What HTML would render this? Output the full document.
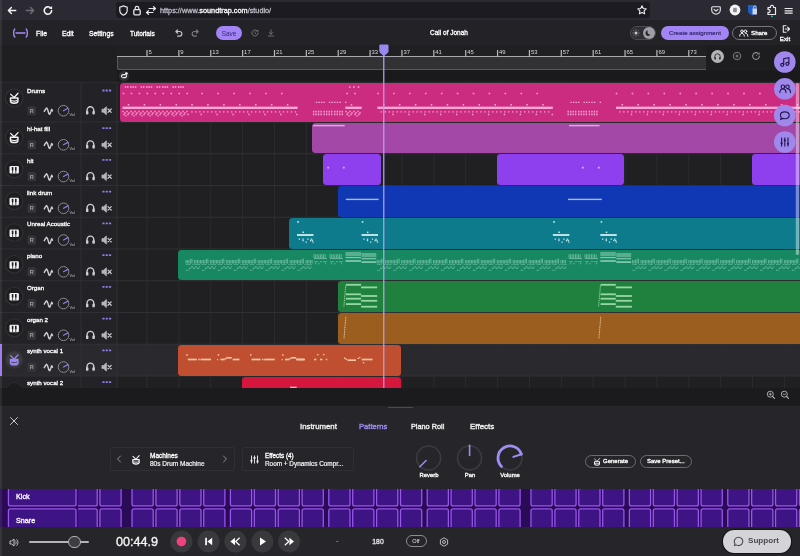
<!DOCTYPE html><html><head><meta charset="utf-8"><title>Call of Jonah - Soundtrap Studio</title><style>
*{box-sizing:border-box;margin:0;padding:0}
html,body{width:800px;height:556px;overflow:hidden;background:#212124;font-family:"Liberation Sans",sans-serif;color:#fff}
.a{position:absolute}
.t{position:absolute;white-space:nowrap;font-weight:700;line-height:1;will-change:transform}
svg{position:absolute;overflow:visible;will-change:transform}
</style></head><body>
<div class="a" style="left:0px;top:0px;width:800px;height:20px;background:#2b2a33;"></div>
<div class="a" style="left:116px;top:2px;width:534px;height:16px;background:#1c1b22;border-radius:3px"></div>
<svg style="left:6.4px;top:5.3px;" width="12" height="11" viewBox="0 0 12 11"><path d="M9.700 5.500H2.600M5.400 2.500L2.400 5.500l3 3" fill="none" stroke="#f0f0f4" stroke-width="1.500" stroke-linecap="round" stroke-linejoin="round"/></svg>
<svg style="left:24.4px;top:5.3px;" width="12" height="11" viewBox="0 0 12 11"><path d="M2.300 5.500H9.400M6.600 2.500l3 3-3 3" fill="none" stroke="#6d6c75" stroke-width="1.500" stroke-linecap="round" stroke-linejoin="round"/></svg>
<svg style="left:42.3px;top:5.3px;" width="12" height="11" viewBox="0 0 12 11"><path d="M9.600 5.500a3.700 3.700 0 1 1-1.200-2.700" fill="none" stroke="#f0f0f4" stroke-width="1.600" stroke-linecap="round"/><path d="M10.100 0.900v3.100H7z" fill="#f0f0f4"/></svg>
<svg style="left:119px;top:5px;" width="9" height="11" viewBox="0 0 9 11"><path d="M4.5 0.8C3.3 1.6 2 1.9 0.8 2v3.2c0 2.3 1.5 4 3.7 5 2.2-1 3.7-2.7 3.7-5V2C7 1.9 5.700 1.600 4.500 0.800z" fill="none" stroke="#e8e8ee" stroke-width="1.2" stroke-linejoin="round"/></svg>
<svg style="left:133px;top:5px;" width="8" height="11" viewBox="0 0 8 11"><rect x="0.8" y="4.6" width="6.4" height="5.2" rx="1" fill="none" stroke="#e8e8ee" stroke-width="1.3"/><path d="M2.2 4.600V3.2a1.8 1.8 0 0 1 3.6 0v1.400" fill="none" stroke="#e8e8ee" stroke-width="1.2"/></svg>
<svg style="left:146px;top:6px;" width="10" height="9" viewBox="0 0 10 9"><path d="M3 2.500h6.500M7.5 0.700l2 1.800-2 1.800M7 6.500H0.500M2.500 4.700l-2 1.800 2 1.800" fill="none" stroke="#e8e8ee" stroke-width="1.2" stroke-linecap="round" stroke-linejoin="round"/></svg>
<div class="t" style="left:160px;top:6.5px;font-size:7.3px;font-weight:400;color:#bcbbc5;will-change:transform;-webkit-text-stroke:0.3px #bcbbc5">https://www.<span style="color:#fbfbfe;-webkit-text-stroke:0.3px #fbfbfe">soundtrap.com</span>/studio/</div>
<svg style="left:637px;top:5px;" width="10" height="10" viewBox="0 0 10 10"><path d="M5 0.800l1.300 2.700 2.900 0.400-2.100 2 0.500 2.900L5 7.400 2.400 8.800l0.500-2.900-2.100-2 2.900-0.400z" fill="none" stroke="#e8e8ee" stroke-width="1.1" stroke-linejoin="round"/></svg>
<svg style="left:711px;top:6px;" width="10" height="9" viewBox="0 0 10 9"><path d="M1.500 0.800h7a0.800 0.800 0 0 1 0.800 0.800v2.300a4.300 4.300 0 0 1-8.600 0V1.600a0.800 0.800 0 0 1 0.800-0.800z" fill="none" stroke="#e8e8ee" stroke-width="1.1"/><path d="M3 3.300l2 1.900 2-1.900" fill="none" stroke="#e8e8ee" stroke-width="1.100" stroke-linecap="round" stroke-linejoin="round"/></svg>
<svg style="left:729px;top:4px;" width="12" height="12" viewBox="0 0 12 12"><circle cx="6" cy="6" r="5.400" fill="#f4f4f6"/><rect x="4.200" y="3.800" width="3.600" height="4.400" rx="0.600" fill="#8a8a90"/></svg>
<svg style="left:747px;top:4px;" width="12" height="12" viewBox="0 0 12 12"><path d="M1 1h8.500v5.500c0 2.500-2 4-4.250 4.800C3 10.500 1 9 1 6.500z" fill="#1f5fc8"/><path d="M5.500 4.500h4.500v6h-4.500z" fill="#c9d7f2"/><path d="M6.500 4.500v-1.200a1.300 1.300 0 0 1 2.600 0v1.200" stroke="#c9d7f2" fill="none" stroke-width="0.900"/></svg>
<svg style="left:765px;top:4px;" width="12" height="13" viewBox="0 0 12 13"><path d="M3 3.500h2.500a1.600 1.600 0 1 1 3 0H10.500v7H3V8.300a1.500 1.500 0 1 0 0-2.700z" fill="none" stroke="#e8e8ee" stroke-width="1.200" stroke-linejoin="round"/><circle cx="7" cy="12.300" r="0.900" fill="#37d0a4"/></svg>
<svg style="left:784px;top:6.5px;" width="9" height="8" viewBox="0 0 9 8"><path d="M1 1.500h7.300M1 3.800h7.300M1 6.100h7.300" stroke="#e8e8ee" stroke-width="1.150" stroke-linecap="round"/></svg>
<div class="a" style="left:0px;top:20px;width:800px;height:25px;background:#232227;"></div>
<svg style="left:11.5px;top:28.3px;" width="17" height="10" viewBox="0 0 17 10"><path d="M2.800 1C1.200 2.600 1.200 7.400 2.800 9M14.200 1c1.600 1.600 1.600 6.400 0 8M4 5h9" fill="none" stroke="#a78bfa" stroke-width="1.350" stroke-linecap="round"/></svg>
<div class="t" style="left:36px;top:30.60px;font-size:6.8px;color:#fff;font-weight:400;-webkit-text-stroke:0.3px #fff;">File</div>
<div class="t" style="left:62px;top:30.60px;font-size:6.8px;color:#fff;font-weight:400;-webkit-text-stroke:0.3px #fff;">Edit</div>
<div class="t" style="left:89px;top:30.60px;font-size:6.8px;color:#fff;font-weight:400;-webkit-text-stroke:0.3px #fff;">Settings</div>
<div class="t" style="left:130px;top:30.75px;font-size:6.5px;color:#fff;font-weight:400;-webkit-text-stroke:0.3px #fff;">Tutorials</div>
<svg style="left:173.7px;top:28.299999999999997px;" width="10" height="10" viewBox="0 0 10 10"><g transform="translate(5 5) scale(0.82) translate(-5 -5.1)"><path d="M1.200 3.300h4.500a2.800 2.800 0 0 1 0 5.600H3.200M3.300 1.200L1.200 3.300l2.100 2.100" fill="none" stroke="#c4c4cc" stroke-width="1.400" stroke-linecap="round" stroke-linejoin="round"/></g></svg>
<svg style="left:190.4px;top:28.299999999999997px;" width="10" height="10" viewBox="0 0 10 10"><g transform="translate(5 5) scale(0.82) translate(-5 -5.1)"><path d="M8.800 3.300H4.300a2.800 2.800 0 0 0 0 5.600h2.500M6.700 1.200l2.100 2.100-2.100 2.100" fill="none" stroke="#7c7c84" stroke-width="1.400" stroke-linecap="round" stroke-linejoin="round"/></g></svg>
<div class="a" style="left:216px;top:26px;width:26px;height:14px;background:#a384f5;border-radius:7px"></div>
<div class="t" style="left:129.2px;width:200px;text-align:center;top:30.60px;font-size:6.4px;color:#33297a;font-weight:400;">Save</div>
<svg style="left:249.6px;top:27.9px;" width="10" height="10" viewBox="0 0 10 10"><g transform="translate(5 5) scale(0.85) translate(-5 -5)"><path d="M8.600 5a3.600 3.600 0 1 1-1.200-2.700" fill="none" stroke="#77777f" stroke-width="1.100" stroke-linecap="round"/><path d="M8.900 1v2.400H6.500z" fill="#77777f"/><path d="M5 3.200V5.200l1.300 0.800" fill="none" stroke="#77777f" stroke-width="0.900"/></g></svg>
<svg style="left:265.9px;top:28px;" width="10" height="10" viewBox="0 0 10 10"><g transform="translate(5 5) scale(0.78) translate(-5 -5)"><path d="M5 1v5.500M2.700 4.300L5 6.600l2.300-2.300M1.500 8.800h7" fill="none" stroke="#77777f" stroke-width="1.100" stroke-linecap="round" stroke-linejoin="round"/></g></svg>
<div class="t" style="left:349px;width:200px;text-align:center;top:29.75px;font-size:6.5px;color:#fff;font-weight:400;-webkit-text-stroke:0.3px #fff;">Call of Jonah</div>
<div class="a" style="left:630px;top:26px;width:26px;height:14px;background:#2f2e34;border-radius:7px;border:1px solid #4c4b52"></div>
<svg style="left:632px;top:29px;" width="8" height="8" viewBox="0 0 8 8"><circle cx="4" cy="4" r="1.500" fill="#c8c8ce"/><path d="M4 0.500v1M4 6.500v1M0.500 4h1M6.500 4h1M1.500 1.500l0.700 0.700M5.800 5.800l0.700 0.700M6.500 1.500l-0.700 0.700M2.200 5.800l-0.700 0.700" stroke="#c8c8ce" stroke-width="0.700"/></svg>
<svg style="left:643px;top:27px;" width="12" height="12" viewBox="0 0 12 12"><circle cx="6" cy="6" r="6" fill="#a09fa8"/><path d="M7.800 7.600A2.800 2.800 0 0 1 5 3.200a2.900 2.900 0 1 0 2.800 4.400z" fill="#2b2a30"/></svg>
<div class="a" style="left:661px;top:26px;width:68px;height:14px;background:#a384f5;border-radius:7px"></div>
<div class="t" style="left:595px;width:200px;text-align:center;top:29.90px;font-size:6.2px;color:#2f2466;font-weight:400;-webkit-text-stroke:0.15px #2f2466;">Create assignment</div>
<div class="a" style="left:732px;top:26px;width:45px;height:14px;background:transparent;border-radius:7px;border:1px solid #77767e"></div>
<svg style="left:739px;top:29px;" width="9" height="8" viewBox="0 0 9 8"><g fill="none" stroke="#fff" stroke-width="0.950" stroke-linecap="round"><circle cx="3" cy="2.300" r="1.300"/><path d="M0.700 7.200c0-2 1-2.900 2.300-2.900s2.300 0.900 2.300 2.900"/><circle cx="6.500" cy="2.300" r="1.300"/><path d="M6.600 4.300c1.300 0 2.200 0.900 2.200 2.900"/></g></svg>
<div class="t" style="left:751.3px;top:29.90px;font-size:6.2px;color:#fff;font-weight:400;-webkit-text-stroke:0.3px #fff;">Share</div>
<svg style="left:781.5px;top:25px;" width="8" height="8" viewBox="0 0 8 8"><path d="M4 0.800H1.300v6.400H4M3.200 4h4.300M5.700 2.200l1.800 1.800-1.800 1.800" fill="none" stroke="#e8e8ee" stroke-width="1.100" stroke-linecap="round" stroke-linejoin="round"/></svg>
<div class="t" style="left:684.9px;width:200px;text-align:center;top:35.50px;font-size:6.2px;color:#fff;font-weight:400;-webkit-text-stroke:0.3px #fff;">Exit</div>
<div class="a" style="left:0px;top:45px;width:800px;height:37px;background:#1f1f22;"></div>
<div class="a" style="left:117px;top:45px;width:683px;height:12px;background:#202023;"></div>
<div class="a" style="left:117px;top:70px;width:683px;height:12px;background:#1a1a1d;"></div>
<div class="a" style="left:117px;top:57.3px;width:590px;height:13.2px;background:#323235;border:1px solid #58585d;border-top:none;border-right:none;border-radius:0 0 0 2.500px"></div>
<div class="a" style="left:117px;top:56.2px;width:590px;height:1.3px;background:#a9a9ad;"></div>
<svg style="left:0px;top:0px;" width="800" height="60" viewBox="0 0 800 60"><rect x="146.4" y="50" width="1.200" height="7" fill="#b9b9bd"/><rect x="178.27" y="50" width="1.200" height="7" fill="#b9b9bd"/><rect x="210.14000000000001" y="50" width="1.200" height="7" fill="#b9b9bd"/><rect x="242.01000000000002" y="50" width="1.200" height="7" fill="#b9b9bd"/><rect x="273.88" y="50" width="1.200" height="7" fill="#b9b9bd"/><rect x="305.75" y="50" width="1.200" height="7" fill="#b9b9bd"/><rect x="337.62" y="50" width="1.200" height="7" fill="#b9b9bd"/><rect x="369.49" y="50" width="1.200" height="7" fill="#b9b9bd"/><rect x="401.36" y="50" width="1.200" height="7" fill="#b9b9bd"/><rect x="433.22999999999996" y="50" width="1.200" height="7" fill="#b9b9bd"/><rect x="465.09999999999997" y="50" width="1.200" height="7" fill="#b9b9bd"/><rect x="496.96999999999997" y="50" width="1.200" height="7" fill="#b9b9bd"/><rect x="528.84" y="50" width="1.200" height="7" fill="#b9b9bd"/><rect x="560.7099999999999" y="50" width="1.200" height="7" fill="#b9b9bd"/><rect x="592.58" y="50" width="1.200" height="7" fill="#b9b9bd"/><rect x="624.4499999999999" y="50" width="1.200" height="7" fill="#b9b9bd"/><rect x="656.32" y="50" width="1.200" height="7" fill="#b9b9bd"/><rect x="688.1899999999999" y="50" width="1.200" height="7" fill="#b9b9bd"/><text x="148.5" y="54.300" font-size="5.900" fill="#d6d6da" font-family="Liberation Sans, sans-serif">5</text><text x="180.37" y="54.300" font-size="5.900" fill="#d6d6da" font-family="Liberation Sans, sans-serif">9</text><text x="212.24" y="54.300" font-size="5.900" fill="#d6d6da" font-family="Liberation Sans, sans-serif">13</text><text x="244.11" y="54.300" font-size="5.900" fill="#d6d6da" font-family="Liberation Sans, sans-serif">17</text><text x="275.98" y="54.300" font-size="5.900" fill="#d6d6da" font-family="Liberation Sans, sans-serif">21</text><text x="307.85" y="54.300" font-size="5.900" fill="#d6d6da" font-family="Liberation Sans, sans-serif">25</text><text x="339.72" y="54.300" font-size="5.900" fill="#d6d6da" font-family="Liberation Sans, sans-serif">29</text><text x="371.59000000000003" y="54.300" font-size="5.900" fill="#d6d6da" font-family="Liberation Sans, sans-serif">33</text><text x="403.46000000000004" y="54.300" font-size="5.900" fill="#d6d6da" font-family="Liberation Sans, sans-serif">37</text><text x="435.33" y="54.300" font-size="5.900" fill="#d6d6da" font-family="Liberation Sans, sans-serif">41</text><text x="467.2" y="54.300" font-size="5.900" fill="#d6d6da" font-family="Liberation Sans, sans-serif">45</text><text x="499.07" y="54.300" font-size="5.900" fill="#d6d6da" font-family="Liberation Sans, sans-serif">49</text><text x="530.94" y="54.300" font-size="5.900" fill="#d6d6da" font-family="Liberation Sans, sans-serif">53</text><text x="562.81" y="54.300" font-size="5.900" fill="#d6d6da" font-family="Liberation Sans, sans-serif">57</text><text x="594.6800000000001" y="54.300" font-size="5.900" fill="#d6d6da" font-family="Liberation Sans, sans-serif">61</text><text x="626.55" y="54.300" font-size="5.900" fill="#d6d6da" font-family="Liberation Sans, sans-serif">65</text><text x="658.4200000000001" y="54.300" font-size="5.900" fill="#d6d6da" font-family="Liberation Sans, sans-serif">69</text><text x="690.29" y="54.300" font-size="5.900" fill="#d6d6da" font-family="Liberation Sans, sans-serif">73</text></svg>
<div class="a" style="left:706px;top:45px;width:94px;height:25.5px;background:#1d1d20;"></div>
<svg style="left:710.5px;top:49.5px;" width="13" height="13" viewBox="0 0 13 13"><circle cx="6.500" cy="6.500" r="6.500" fill="#b4b4b8"/><path d="M3.800 8.300V6.500a2.700 2.700 0 0 1 5.400 0v1.800" fill="none" stroke="#3a3a3e" stroke-width="1"/><rect x="3.300" y="7" width="1.700" height="2.400" rx="0.500" fill="#3a3a3e"/><rect x="8" y="7" width="1.700" height="2.400" rx="0.500" fill="#3a3a3e"/></svg>
<svg style="left:732px;top:51px;" width="10" height="10" viewBox="0 0 10 10"><circle cx="5" cy="5" r="3.600" fill="none" stroke="#6a6a70" stroke-width="1.300"/><circle cx="5" cy="5" r="1.500" fill="#6a6a70"/></svg>
<svg style="left:751px;top:51px;" width="10" height="10" viewBox="0 0 10 10"><path d="M8.400 5a3.400 3.400 0 1 1-1.100-2.500" fill="none" stroke="#8c8c92" stroke-width="1.100" stroke-linecap="round"/><path d="M8.700 1.200v2.300H6.400z" fill="#8c8c92"/><path d="M5 5l1.200-1" stroke="#8c8c92" stroke-width="0.900"/></svg>
<svg style="left:118.6px;top:71px;" width="10" height="10" viewBox="0 0 10 10"><circle cx="5" cy="5" r="5.200" fill="#303034"/><path d="M2.600 5.800V5a1.500 1.500 0 0 1 1.500-1.500h2M7.400 4.600v0.600a1.500 1.500 0 0 1-1.500 1.500H3.800" fill="none" stroke="#ececf0" stroke-width="1.250" stroke-linecap="round"/><circle cx="7.400" cy="2.600" r="1.350" fill="#f4f4f6"/></svg>
<div class="a" style="left:0px;top:82px;width:117px;height:306px;background:#232327;"></div>
<div class="a" style="left:117px;top:82px;width:683px;height:306px;background:#202023;"></div>
<div class="a" style="left:0px;top:344.25px;width:800px;height:31.75px;background:#2a2a2e;"></div>
<div class="a" style="left:0px;top:344.25px;width:2px;height:31.75px;background:#9f7fef;"></div>
<svg style="left:0px;top:0px;" width="800" height="388" viewBox="0 0 800 388"><rect x="146.5" y="82" width="1" height="306" fill="#2c2c30"/><rect x="178.37" y="82" width="1" height="306" fill="#2c2c30"/><rect x="210.24" y="82" width="1" height="306" fill="#2c2c30"/><rect x="242.11" y="82" width="1" height="306" fill="#2c2c30"/><rect x="273.98" y="82" width="1" height="306" fill="#2c2c30"/><rect x="305.85" y="82" width="1" height="306" fill="#2c2c30"/><rect x="337.72" y="82" width="1" height="306" fill="#2c2c30"/><rect x="369.59000000000003" y="82" width="1" height="306" fill="#2c2c30"/><rect x="401.46" y="82" width="1" height="306" fill="#2c2c30"/><rect x="433.33" y="82" width="1" height="306" fill="#2c2c30"/><rect x="465.2" y="82" width="1" height="306" fill="#2c2c30"/><rect x="497.07000000000005" y="82" width="1" height="306" fill="#2c2c30"/><rect x="528.9399999999999" y="82" width="1" height="306" fill="#2c2c30"/><rect x="560.8100000000001" y="82" width="1" height="306" fill="#2c2c30"/><rect x="592.68" y="82" width="1" height="306" fill="#2c2c30"/><rect x="624.5500000000001" y="82" width="1" height="306" fill="#2c2c30"/><rect x="656.42" y="82" width="1" height="306" fill="#2c2c30"/><rect x="688.29" y="82" width="1" height="306" fill="#2c2c30"/><rect x="720.16" y="82" width="1" height="306" fill="#2c2c30"/><rect x="752.03" y="82" width="1" height="306" fill="#2c2c30"/><rect x="783.9" y="82" width="1" height="306" fill="#2c2c30"/><rect x="0" y="81.7" width="800" height="1" fill="#303034"/><rect x="0" y="121.5" width="800" height="1" fill="#303034"/><rect x="0" y="153.25" width="800" height="1" fill="#303034"/><rect x="0" y="185.0" width="800" height="1" fill="#303034"/><rect x="0" y="216.75" width="800" height="1" fill="#303034"/><rect x="0" y="248.5" width="800" height="1" fill="#303034"/><rect x="0" y="280.25" width="800" height="1" fill="#303034"/><rect x="0" y="312.0" width="800" height="1" fill="#303034"/><rect x="0" y="343.75" width="800" height="1" fill="#303034"/><rect x="0" y="375.5" width="800" height="1" fill="#303034"/><rect x="80.500" y="82" width="1" height="306" fill="#303034"/><rect x="116.500" y="82" width="1" height="306" fill="#303034"/></svg>
<svg style="left:0;top:0" width="117" height="388" viewBox="0 0 117 388"><defs><clipPath id="hc"><rect x="0" y="82" width="117" height="306"/></clipPath></defs><g clip-path="url(#hc)"><circle cx="14.200" cy="98.0" r="8.800" fill="#1e1e21" stroke="#303035" stroke-width="1.200"/><g transform="translate(14.200 98.7)"><path d="M-3.700 -0.800v3.200a3.700 2.100 0 0 0 7.400 0v-3.200z" fill="none" stroke="#f2f2f4" stroke-width="1.500" stroke-linejoin="round" stroke-linecap="round"/><path d="M-2.600 1.900c1.600 0.700 3.600 0.700 5.200 0" fill="none" stroke="#f2f2f4" stroke-width="1.100" stroke-linecap="round"/><path d="M-3.600 -4.600l3.400 3.300M3.800 -5.400l-3.800 4.200" fill="none" stroke="#f2f2f4" stroke-width="1.300" stroke-linecap="round"/></g><g fill="#8f7be8"><rect x="102.300" y="89.5" width="2.300" height="1.900" rx="0.500"/><rect x="105.600" y="89.5" width="2.300" height="1.900" rx="0.500"/><rect x="108.900" y="89.5" width="2.300" height="1.900" rx="0.500"/></g><rect x="27.500" y="106.2" width="8.500" height="9" rx="1.500" fill="#35353a"/><text x="31.750" y="112.8" font-size="5.600" font-weight="700" fill="#9c9ca2" text-anchor="middle" font-family="Liberation Sans, sans-serif">R</text><path d="M44.300 111.3l1.300 -2.200 1 -1.200 1 1.600 1.300 4.200 0.900 0.600 0.900 -2.200 1 -2.800 0.800 1.600" fill="none" stroke="#d0d0d5" stroke-width="1.400" stroke-linejoin="round" stroke-linecap="round"/><circle cx="63.500" cy="110.7" r="5.300" fill="none" stroke="#8a8a90" stroke-width="1"/><path d="M63.500 110.7l4.400 -2.400" stroke="#8f7be8" stroke-width="1.300" stroke-linecap="round"/><text x="69.500" y="116.2" font-size="3.800" fill="#b4b4bc" font-family="Liberation Sans, sans-serif">Vol</text><path d="M87 113.0v-2.300a3.400 3.900 0 0 1 6.800 0v2.300" fill="none" stroke="#cfcfd4" stroke-width="1.400"/><rect x="86" y="110.9" width="2.400" height="3.600" rx="0.900" fill="#cfcfd4"/><rect x="92.400" y="110.9" width="2.400" height="3.600" rx="0.900" fill="#cfcfd4"/><path d="M102 109.2h1.700l2.600 -2.500v8l-2.600 -2.500h-1.700z" fill="#b4b4ba" stroke="#b4b4ba" stroke-width="0.900" stroke-linejoin="round"/><path d="M108 109.0l3.200 3.400M111.200 109.0l-3.200 3.400" stroke="#c4c4ca" stroke-width="1.250" stroke-linecap="round"/><circle cx="14.200" cy="137.3" r="8.800" fill="#1e1e21" stroke="#303035" stroke-width="1.200"/><g transform="translate(14.200 138.0)"><path d="M-3.700 -0.800v3.200a3.700 2.100 0 0 0 7.400 0v-3.200z" fill="none" stroke="#f2f2f4" stroke-width="1.500" stroke-linejoin="round" stroke-linecap="round"/><path d="M-2.600 1.900c1.600 0.700 3.600 0.700 5.200 0" fill="none" stroke="#f2f2f4" stroke-width="1.100" stroke-linecap="round"/><path d="M-3.600 -4.600l3.400 3.300M3.800 -5.400l-3.800 4.200" fill="none" stroke="#f2f2f4" stroke-width="1.300" stroke-linecap="round"/></g><g fill="#8f7be8"><rect x="102.300" y="127.19999999999999" width="2.300" height="1.900" rx="0.500"/><rect x="105.600" y="127.19999999999999" width="2.300" height="1.900" rx="0.500"/><rect x="108.900" y="127.19999999999999" width="2.300" height="1.900" rx="0.500"/></g><rect x="27.500" y="140.3" width="8.500" height="9" rx="1.500" fill="#35353a"/><text x="31.750" y="146.9" font-size="5.600" font-weight="700" fill="#9c9ca2" text-anchor="middle" font-family="Liberation Sans, sans-serif">R</text><path d="M44.300 145.4l1.300 -2.200 1 -1.200 1 1.600 1.300 4.200 0.900 0.600 0.900 -2.200 1 -2.800 0.800 1.600" fill="none" stroke="#d0d0d5" stroke-width="1.400" stroke-linejoin="round" stroke-linecap="round"/><circle cx="63.500" cy="144.8" r="5.300" fill="none" stroke="#8a8a90" stroke-width="1"/><path d="M63.500 144.8l4.400 -2.400" stroke="#8f7be8" stroke-width="1.300" stroke-linecap="round"/><text x="69.500" y="150.3" font-size="3.800" fill="#b4b4bc" font-family="Liberation Sans, sans-serif">Vol</text><path d="M87 147.10000000000002v-2.300a3.400 3.900 0 0 1 6.800 0v2.300" fill="none" stroke="#cfcfd4" stroke-width="1.400"/><rect x="86" y="145.0" width="2.400" height="3.600" rx="0.900" fill="#cfcfd4"/><rect x="92.400" y="145.0" width="2.400" height="3.600" rx="0.900" fill="#cfcfd4"/><path d="M102 143.3h1.700l2.600 -2.500v8l-2.600 -2.500h-1.700z" fill="#b4b4ba" stroke="#b4b4ba" stroke-width="0.900" stroke-linejoin="round"/><path d="M108 143.10000000000002l3.200 3.400M111.200 143.10000000000002l-3.200 3.400" stroke="#c4c4ca" stroke-width="1.250" stroke-linecap="round"/><circle cx="14.200" cy="169.05" r="8.800" fill="#1e1e21" stroke="#303035" stroke-width="1.200"/><g transform="translate(14.200 169.75)"><rect x="-4.700" y="-3.700" width="9.400" height="7.400" rx="1.300" fill="#f2f2f4"/><path d="M-1.600 -0.200v3.900M1.600 -0.200v3.900" stroke="#1b1b1e" stroke-width="0.800"/><rect x="-2.400" y="-2.700" width="1.600" height="3.400" fill="#1b1b1e"/><rect x="0.800" y="-2.700" width="1.600" height="3.400" fill="#1b1b1e"/></g><g fill="#8f7be8"><rect x="102.300" y="158.95" width="2.300" height="1.900" rx="0.500"/><rect x="105.600" y="158.95" width="2.300" height="1.900" rx="0.500"/><rect x="108.900" y="158.95" width="2.300" height="1.900" rx="0.500"/></g><rect x="27.500" y="172.05" width="8.500" height="9" rx="1.500" fill="#35353a"/><text x="31.750" y="178.65" font-size="5.600" font-weight="700" fill="#9c9ca2" text-anchor="middle" font-family="Liberation Sans, sans-serif">R</text><path d="M44.300 177.15l1.300 -2.200 1 -1.200 1 1.600 1.300 4.200 0.900 0.600 0.900 -2.200 1 -2.800 0.800 1.600" fill="none" stroke="#d0d0d5" stroke-width="1.400" stroke-linejoin="round" stroke-linecap="round"/><circle cx="63.500" cy="176.55" r="5.300" fill="none" stroke="#8a8a90" stroke-width="1"/><path d="M63.500 176.55l4.400 -2.400" stroke="#8f7be8" stroke-width="1.300" stroke-linecap="round"/><text x="69.500" y="182.05" font-size="3.800" fill="#b4b4bc" font-family="Liberation Sans, sans-serif">Vol</text><path d="M87 178.85000000000002v-2.300a3.400 3.900 0 0 1 6.800 0v2.300" fill="none" stroke="#cfcfd4" stroke-width="1.400"/><rect x="86" y="176.75" width="2.400" height="3.600" rx="0.900" fill="#cfcfd4"/><rect x="92.400" y="176.75" width="2.400" height="3.600" rx="0.900" fill="#cfcfd4"/><path d="M102 175.05h1.700l2.600 -2.500v8l-2.600 -2.500h-1.700z" fill="#b4b4ba" stroke="#b4b4ba" stroke-width="0.900" stroke-linejoin="round"/><path d="M108 174.85000000000002l3.200 3.400M111.200 174.85000000000002l-3.200 3.400" stroke="#c4c4ca" stroke-width="1.250" stroke-linecap="round"/><circle cx="14.200" cy="200.8" r="8.800" fill="#1e1e21" stroke="#303035" stroke-width="1.200"/><g transform="translate(14.200 201.5)"><rect x="-4.700" y="-3.700" width="9.400" height="7.400" rx="1.300" fill="#f2f2f4"/><path d="M-1.600 -0.200v3.900M1.600 -0.200v3.900" stroke="#1b1b1e" stroke-width="0.800"/><rect x="-2.400" y="-2.700" width="1.600" height="3.400" fill="#1b1b1e"/><rect x="0.800" y="-2.700" width="1.600" height="3.400" fill="#1b1b1e"/></g><g fill="#8f7be8"><rect x="102.300" y="190.7" width="2.300" height="1.900" rx="0.500"/><rect x="105.600" y="190.7" width="2.300" height="1.900" rx="0.500"/><rect x="108.900" y="190.7" width="2.300" height="1.900" rx="0.500"/></g><rect x="27.500" y="203.8" width="8.500" height="9" rx="1.500" fill="#35353a"/><text x="31.750" y="210.4" font-size="5.600" font-weight="700" fill="#9c9ca2" text-anchor="middle" font-family="Liberation Sans, sans-serif">R</text><path d="M44.300 208.9l1.300 -2.200 1 -1.200 1 1.600 1.300 4.200 0.900 0.600 0.900 -2.200 1 -2.800 0.800 1.600" fill="none" stroke="#d0d0d5" stroke-width="1.400" stroke-linejoin="round" stroke-linecap="round"/><circle cx="63.500" cy="208.3" r="5.300" fill="none" stroke="#8a8a90" stroke-width="1"/><path d="M63.500 208.3l4.400 -2.400" stroke="#8f7be8" stroke-width="1.300" stroke-linecap="round"/><text x="69.500" y="213.8" font-size="3.800" fill="#b4b4bc" font-family="Liberation Sans, sans-serif">Vol</text><path d="M87 210.60000000000002v-2.300a3.400 3.900 0 0 1 6.800 0v2.300" fill="none" stroke="#cfcfd4" stroke-width="1.400"/><rect x="86" y="208.5" width="2.400" height="3.600" rx="0.900" fill="#cfcfd4"/><rect x="92.400" y="208.5" width="2.400" height="3.600" rx="0.900" fill="#cfcfd4"/><path d="M102 206.8h1.700l2.600 -2.500v8l-2.600 -2.500h-1.700z" fill="#b4b4ba" stroke="#b4b4ba" stroke-width="0.900" stroke-linejoin="round"/><path d="M108 206.60000000000002l3.200 3.400M111.200 206.60000000000002l-3.200 3.400" stroke="#c4c4ca" stroke-width="1.250" stroke-linecap="round"/><circle cx="14.200" cy="232.55" r="8.800" fill="#1e1e21" stroke="#303035" stroke-width="1.200"/><g transform="translate(14.200 233.25)"><rect x="-4.700" y="-3.700" width="9.400" height="7.400" rx="1.300" fill="#f2f2f4"/><path d="M-1.600 -0.200v3.900M1.600 -0.200v3.900" stroke="#1b1b1e" stroke-width="0.800"/><rect x="-2.400" y="-2.700" width="1.600" height="3.400" fill="#1b1b1e"/><rect x="0.800" y="-2.700" width="1.600" height="3.400" fill="#1b1b1e"/></g><g fill="#8f7be8"><rect x="102.300" y="222.45" width="2.300" height="1.900" rx="0.500"/><rect x="105.600" y="222.45" width="2.300" height="1.900" rx="0.500"/><rect x="108.900" y="222.45" width="2.300" height="1.900" rx="0.500"/></g><rect x="27.500" y="235.55" width="8.500" height="9" rx="1.500" fill="#35353a"/><text x="31.750" y="242.15" font-size="5.600" font-weight="700" fill="#9c9ca2" text-anchor="middle" font-family="Liberation Sans, sans-serif">R</text><path d="M44.300 240.65l1.300 -2.200 1 -1.200 1 1.600 1.300 4.200 0.900 0.600 0.900 -2.200 1 -2.800 0.800 1.600" fill="none" stroke="#d0d0d5" stroke-width="1.400" stroke-linejoin="round" stroke-linecap="round"/><circle cx="63.500" cy="240.05" r="5.300" fill="none" stroke="#8a8a90" stroke-width="1"/><path d="M63.500 240.05l4.400 -2.400" stroke="#8f7be8" stroke-width="1.300" stroke-linecap="round"/><text x="69.500" y="245.55" font-size="3.800" fill="#b4b4bc" font-family="Liberation Sans, sans-serif">Vol</text><path d="M87 242.35000000000002v-2.300a3.400 3.900 0 0 1 6.800 0v2.300" fill="none" stroke="#cfcfd4" stroke-width="1.400"/><rect x="86" y="240.25" width="2.400" height="3.600" rx="0.900" fill="#cfcfd4"/><rect x="92.400" y="240.25" width="2.400" height="3.600" rx="0.900" fill="#cfcfd4"/><path d="M102 238.55h1.700l2.600 -2.500v8l-2.600 -2.500h-1.700z" fill="#b4b4ba" stroke="#b4b4ba" stroke-width="0.900" stroke-linejoin="round"/><path d="M108 238.35000000000002l3.200 3.400M111.200 238.35000000000002l-3.200 3.400" stroke="#c4c4ca" stroke-width="1.250" stroke-linecap="round"/><circle cx="14.200" cy="264.3" r="8.800" fill="#1e1e21" stroke="#303035" stroke-width="1.200"/><g transform="translate(14.200 265.0)"><rect x="-4.700" y="-3.700" width="9.400" height="7.400" rx="1.300" fill="#f2f2f4"/><path d="M-1.600 -0.200v3.900M1.600 -0.200v3.900" stroke="#1b1b1e" stroke-width="0.800"/><rect x="-2.400" y="-2.700" width="1.600" height="3.400" fill="#1b1b1e"/><rect x="0.800" y="-2.700" width="1.600" height="3.400" fill="#1b1b1e"/></g><g fill="#8f7be8"><rect x="102.300" y="254.20000000000002" width="2.300" height="1.900" rx="0.500"/><rect x="105.600" y="254.20000000000002" width="2.300" height="1.900" rx="0.500"/><rect x="108.900" y="254.20000000000002" width="2.300" height="1.900" rx="0.500"/></g><rect x="27.500" y="267.3" width="8.500" height="9" rx="1.500" fill="#35353a"/><text x="31.750" y="273.90000000000003" font-size="5.600" font-weight="700" fill="#9c9ca2" text-anchor="middle" font-family="Liberation Sans, sans-serif">R</text><path d="M44.300 272.40000000000003l1.300 -2.200 1 -1.200 1 1.600 1.300 4.200 0.900 0.600 0.900 -2.200 1 -2.800 0.800 1.600" fill="none" stroke="#d0d0d5" stroke-width="1.400" stroke-linejoin="round" stroke-linecap="round"/><circle cx="63.500" cy="271.8" r="5.300" fill="none" stroke="#8a8a90" stroke-width="1"/><path d="M63.500 271.8l4.400 -2.400" stroke="#8f7be8" stroke-width="1.300" stroke-linecap="round"/><text x="69.500" y="277.3" font-size="3.800" fill="#b4b4bc" font-family="Liberation Sans, sans-serif">Vol</text><path d="M87 274.1v-2.300a3.400 3.900 0 0 1 6.800 0v2.300" fill="none" stroke="#cfcfd4" stroke-width="1.400"/><rect x="86" y="272.0" width="2.400" height="3.600" rx="0.900" fill="#cfcfd4"/><rect x="92.400" y="272.0" width="2.400" height="3.600" rx="0.900" fill="#cfcfd4"/><path d="M102 270.3h1.700l2.600 -2.500v8l-2.600 -2.500h-1.700z" fill="#b4b4ba" stroke="#b4b4ba" stroke-width="0.900" stroke-linejoin="round"/><path d="M108 270.1l3.200 3.400M111.200 270.1l-3.200 3.400" stroke="#c4c4ca" stroke-width="1.250" stroke-linecap="round"/><circle cx="14.200" cy="296.05" r="8.800" fill="#1e1e21" stroke="#303035" stroke-width="1.200"/><g transform="translate(14.200 296.75)"><rect x="-4.700" y="-3.700" width="9.400" height="7.400" rx="1.300" fill="#f2f2f4"/><path d="M-1.600 -0.200v3.900M1.600 -0.200v3.900" stroke="#1b1b1e" stroke-width="0.800"/><rect x="-2.400" y="-2.700" width="1.600" height="3.400" fill="#1b1b1e"/><rect x="0.800" y="-2.700" width="1.600" height="3.400" fill="#1b1b1e"/></g><g fill="#8f7be8"><rect x="102.300" y="285.95000000000005" width="2.300" height="1.900" rx="0.500"/><rect x="105.600" y="285.95000000000005" width="2.300" height="1.900" rx="0.500"/><rect x="108.900" y="285.95000000000005" width="2.300" height="1.900" rx="0.500"/></g><rect x="27.500" y="299.05" width="8.500" height="9" rx="1.500" fill="#35353a"/><text x="31.750" y="305.65000000000003" font-size="5.600" font-weight="700" fill="#9c9ca2" text-anchor="middle" font-family="Liberation Sans, sans-serif">R</text><path d="M44.300 304.15000000000003l1.300 -2.200 1 -1.200 1 1.600 1.300 4.200 0.900 0.600 0.900 -2.200 1 -2.800 0.800 1.600" fill="none" stroke="#d0d0d5" stroke-width="1.400" stroke-linejoin="round" stroke-linecap="round"/><circle cx="63.500" cy="303.55" r="5.300" fill="none" stroke="#8a8a90" stroke-width="1"/><path d="M63.500 303.55l4.400 -2.400" stroke="#8f7be8" stroke-width="1.300" stroke-linecap="round"/><text x="69.500" y="309.05" font-size="3.800" fill="#b4b4bc" font-family="Liberation Sans, sans-serif">Vol</text><path d="M87 305.85v-2.300a3.400 3.900 0 0 1 6.800 0v2.300" fill="none" stroke="#cfcfd4" stroke-width="1.400"/><rect x="86" y="303.75" width="2.400" height="3.600" rx="0.900" fill="#cfcfd4"/><rect x="92.400" y="303.75" width="2.400" height="3.600" rx="0.900" fill="#cfcfd4"/><path d="M102 302.05h1.700l2.600 -2.500v8l-2.600 -2.500h-1.700z" fill="#b4b4ba" stroke="#b4b4ba" stroke-width="0.900" stroke-linejoin="round"/><path d="M108 301.85l3.200 3.400M111.200 301.85l-3.200 3.400" stroke="#c4c4ca" stroke-width="1.250" stroke-linecap="round"/><circle cx="14.200" cy="327.8" r="8.800" fill="#1e1e21" stroke="#303035" stroke-width="1.200"/><g transform="translate(14.200 328.5)"><rect x="-4.700" y="-3.700" width="9.400" height="7.400" rx="1.300" fill="#f2f2f4"/><path d="M-1.600 -0.200v3.900M1.600 -0.200v3.900" stroke="#1b1b1e" stroke-width="0.800"/><rect x="-2.400" y="-2.700" width="1.600" height="3.400" fill="#1b1b1e"/><rect x="0.800" y="-2.700" width="1.600" height="3.400" fill="#1b1b1e"/></g><g fill="#8f7be8"><rect x="102.300" y="317.70000000000005" width="2.300" height="1.900" rx="0.500"/><rect x="105.600" y="317.70000000000005" width="2.300" height="1.900" rx="0.500"/><rect x="108.900" y="317.70000000000005" width="2.300" height="1.900" rx="0.500"/></g><rect x="27.500" y="330.8" width="8.500" height="9" rx="1.500" fill="#35353a"/><text x="31.750" y="337.40000000000003" font-size="5.600" font-weight="700" fill="#9c9ca2" text-anchor="middle" font-family="Liberation Sans, sans-serif">R</text><path d="M44.300 335.90000000000003l1.300 -2.200 1 -1.200 1 1.600 1.300 4.200 0.900 0.600 0.900 -2.200 1 -2.800 0.800 1.600" fill="none" stroke="#d0d0d5" stroke-width="1.400" stroke-linejoin="round" stroke-linecap="round"/><circle cx="63.500" cy="335.3" r="5.300" fill="none" stroke="#8a8a90" stroke-width="1"/><path d="M63.500 335.3l4.400 -2.400" stroke="#8f7be8" stroke-width="1.300" stroke-linecap="round"/><text x="69.500" y="340.8" font-size="3.800" fill="#b4b4bc" font-family="Liberation Sans, sans-serif">Vol</text><path d="M87 337.6v-2.300a3.400 3.900 0 0 1 6.800 0v2.300" fill="none" stroke="#cfcfd4" stroke-width="1.400"/><rect x="86" y="335.5" width="2.400" height="3.600" rx="0.900" fill="#cfcfd4"/><rect x="92.400" y="335.5" width="2.400" height="3.600" rx="0.900" fill="#cfcfd4"/><path d="M102 333.8h1.700l2.600 -2.500v8l-2.600 -2.500h-1.700z" fill="#b4b4ba" stroke="#b4b4ba" stroke-width="0.900" stroke-linejoin="round"/><path d="M108 333.6l3.200 3.400M111.200 333.6l-3.200 3.400" stroke="#c4c4ca" stroke-width="1.250" stroke-linecap="round"/><circle cx="14.200" cy="359.55" r="8.800" fill="#3a3a3f" stroke="#303035" stroke-width="1.200"/><g transform="translate(14.200 360.25)"><path d="M-3.700 -0.800v3.200a3.700 2.100 0 0 0 7.400 0v-3.200z" fill="#9c86f2" stroke="#9c86f2" stroke-width="1.500" stroke-linejoin="round" stroke-linecap="round"/><path d="M-2.600 1.900c1.600 0.700 3.600 0.700 5.200 0" fill="none" stroke="#38383d" stroke-width="0.900" stroke-linecap="round"/><path d="M-3.600 -4.600l3.400 3.300M3.800 -5.400l-3.800 4.200" fill="none" stroke="#9c86f2" stroke-width="1.300" stroke-linecap="round"/></g><g fill="#8f7be8"><rect x="102.300" y="349.45000000000005" width="2.300" height="1.900" rx="0.500"/><rect x="105.600" y="349.45000000000005" width="2.300" height="1.900" rx="0.500"/><rect x="108.900" y="349.45000000000005" width="2.300" height="1.900" rx="0.500"/></g><rect x="27.500" y="362.55" width="8.500" height="9" rx="1.500" fill="#35353a"/><text x="31.750" y="369.15000000000003" font-size="5.600" font-weight="700" fill="#9c9ca2" text-anchor="middle" font-family="Liberation Sans, sans-serif">R</text><path d="M44.300 367.65000000000003l1.300 -2.200 1 -1.200 1 1.600 1.300 4.200 0.900 0.600 0.900 -2.200 1 -2.800 0.800 1.600" fill="none" stroke="#d0d0d5" stroke-width="1.400" stroke-linejoin="round" stroke-linecap="round"/><circle cx="63.500" cy="367.05" r="5.300" fill="none" stroke="#8a8a90" stroke-width="1"/><path d="M63.500 367.05l4.400 -2.400" stroke="#8f7be8" stroke-width="1.300" stroke-linecap="round"/><text x="69.500" y="372.55" font-size="3.800" fill="#b4b4bc" font-family="Liberation Sans, sans-serif">Vol</text><path d="M87 369.35v-2.300a3.400 3.900 0 0 1 6.800 0v2.300" fill="none" stroke="#cfcfd4" stroke-width="1.400"/><rect x="86" y="367.25" width="2.400" height="3.600" rx="0.900" fill="#cfcfd4"/><rect x="92.400" y="367.25" width="2.400" height="3.600" rx="0.900" fill="#cfcfd4"/><path d="M102 365.55h1.700l2.600 -2.500v8l-2.600 -2.500h-1.700z" fill="#b4b4ba" stroke="#b4b4ba" stroke-width="0.900" stroke-linejoin="round"/><path d="M108 365.35l3.200 3.400M111.200 365.35l-3.200 3.400" stroke="#c4c4ca" stroke-width="1.250" stroke-linecap="round"/><circle cx="14.200" cy="391.3" r="8.800" fill="#1c1c1f" stroke="#2e2e32" stroke-width="1"/><g fill="#8f7be8"><rect x="102.300" y="381.20000000000005" width="2.300" height="1.900" rx="0.500"/><rect x="105.600" y="381.20000000000005" width="2.300" height="1.900" rx="0.500"/><rect x="108.900" y="381.20000000000005" width="2.300" height="1.900" rx="0.500"/></g></g></svg>
<div class="t" style="left:27.2px;top:88.30px;font-size:6.2px;color:#fff;font-weight:400;-webkit-text-stroke:0.3px #fff;">Drums</div>
<div class="t" style="left:27.2px;top:126.00px;font-size:6.2px;color:#fff;font-weight:400;-webkit-text-stroke:0.3px #fff;">hi-hat fill</div>
<div class="t" style="left:27.2px;top:157.75px;font-size:6.2px;color:#fff;font-weight:400;-webkit-text-stroke:0.3px #fff;">hit</div>
<div class="t" style="left:27.2px;top:189.50px;font-size:6.2px;color:#fff;font-weight:400;-webkit-text-stroke:0.3px #fff;">link drum</div>
<div class="t" style="left:27.2px;top:221.25px;font-size:6.2px;color:#fff;font-weight:400;-webkit-text-stroke:0.3px #fff;">Unreal Acoustic</div>
<div class="t" style="left:27.2px;top:253.00px;font-size:6.2px;color:#fff;font-weight:400;-webkit-text-stroke:0.3px #fff;">piano</div>
<div class="t" style="left:27.2px;top:284.75px;font-size:6.2px;color:#fff;font-weight:400;-webkit-text-stroke:0.3px #fff;">Organ</div>
<div class="t" style="left:27.2px;top:316.50px;font-size:6.2px;color:#fff;font-weight:400;-webkit-text-stroke:0.3px #fff;">organ 2</div>
<div class="t" style="left:27.2px;top:348.25px;font-size:6.2px;color:#fff;font-weight:400;-webkit-text-stroke:0.3px #fff;">synth vocal 1</div>
<div class="t" style="left:27.2px;top:380.00px;font-size:6.2px;color:#fff;font-weight:400;-webkit-text-stroke:0.3px #fff;">synth vocal 2</div>
<div class="a" style="left:119.8px;top:82.8px;width:680.2px;height:38.8px;background:#cc2c80;border-radius:3.5px 0 0 3.5px"></div>
<div class="a" style="left:311.5px;top:122.6px;width:488.5px;height:30.75px;background:#a348a6;border-radius:3.5px 0 0 3.5px"></div>
<div class="a" style="left:323px;top:154.35px;width:58px;height:30.75px;background:#8f40ee;border-radius:3.5px"></div>
<div class="a" style="left:496.8px;top:154.35px;width:127.19999999999999px;height:30.75px;background:#8f40ee;border-radius:3.5px"></div>
<div class="a" style="left:751.8px;top:154.35px;width:48.200000000000045px;height:30.75px;background:#8f40ee;border-radius:3.5px 0 0 3.5px"></div>
<div class="a" style="left:337.5px;top:186.1px;width:462.5px;height:30.75px;background:#1038b4;border-radius:3.5px 0 0 3.5px"></div>
<div class="a" style="left:289.2px;top:217.85px;width:510.8px;height:30.75px;background:#0d7b8c;border-radius:3.5px 0 0 3.5px"></div>
<div class="a" style="left:178.2px;top:249.6px;width:621.8px;height:30.75000000000003px;background:#188863;border-radius:3.5px 0 0 3.5px"></div>
<div class="a" style="left:337.5px;top:281.35px;width:462.5px;height:30.75px;background:#20813f;border-radius:3.5px 0 0 3.5px"></div>
<div class="a" style="left:337.5px;top:313.1px;width:462.5px;height:30.75px;background:#9b5e1e;border-radius:3.5px 0 0 3.5px"></div>
<div class="a" style="left:178.2px;top:344.85px;width:223.10000000000002px;height:30.75px;background:#bf4f30;border-radius:3.5px"></div>
<div class="a" style="left:241.6px;top:376.6px;width:159.70000000000002px;height:30.75px;background:#d6173d;border-radius:3.5px"></div>
<svg style="left:0;top:0" width="800" height="388" viewBox="0 0 800 388"><defs><clipPath id="tc"><rect x="0" y="40" width="800" height="348"/></clipPath></defs><g clip-path="url(#tc)"><path d="M122.75 92.65h1.5v1.5h-1.5zM130.72 92.65h1.5v1.5h-1.5zM138.68 92.65h1.5v1.5h-1.5zM146.65 92.65h1.5v1.5h-1.5zM154.62 92.65h1.5v1.5h-1.5zM162.59 92.65h1.5v1.5h-1.5zM170.55 92.65h1.5v1.5h-1.5zM178.52 92.65h1.5v1.5h-1.5zM186.49 92.65h1.5v1.5h-1.5z" fill="#fbaad8"/><path d="M127.75 104.05h1.5v1.5h-1.5zM143.68 104.05h1.5v1.5h-1.5zM159.62 104.05h1.5v1.5h-1.5zM175.55 104.05h1.5v1.5h-1.5z" fill="#fbaad8"/><rect x="122.50" y="106.65" width="65.50" height="2.3" fill="#fbaad8"/><path d="M122.35 110.85h1.3v1.3h-1.3zM126.35 110.85h1.3v1.3h-1.3zM130.35 110.85h1.3v1.3h-1.3zM134.35 110.85h1.3v1.3h-1.3zM138.35 110.85h1.3v1.3h-1.3zM142.35 110.85h1.3v1.3h-1.3zM146.35 110.85h1.3v1.3h-1.3zM150.35 110.85h1.3v1.3h-1.3zM154.35 110.85h1.3v1.3h-1.3zM158.35 110.85h1.3v1.3h-1.3zM162.35 110.85h1.3v1.3h-1.3zM166.35 110.85h1.3v1.3h-1.3zM170.35 110.85h1.3v1.3h-1.3zM174.35 110.85h1.3v1.3h-1.3zM178.35 110.85h1.3v1.3h-1.3zM182.35 110.85h1.3v1.3h-1.3zM186.35 110.85h1.3v1.3h-1.3z" fill="#fbaad8"/><path d="M124.35 112.35h1.3v1.3h-1.3zM128.35 112.35h1.3v1.3h-1.3zM132.35 112.35h1.3v1.3h-1.3zM136.35 112.35h1.3v1.3h-1.3zM140.35 112.35h1.3v1.3h-1.3zM144.35 112.35h1.3v1.3h-1.3zM148.35 112.35h1.3v1.3h-1.3zM152.35 112.35h1.3v1.3h-1.3zM156.35 112.35h1.3v1.3h-1.3zM160.35 112.35h1.3v1.3h-1.3zM164.35 112.35h1.3v1.3h-1.3zM168.35 112.35h1.3v1.3h-1.3zM172.35 112.35h1.3v1.3h-1.3zM176.35 112.35h1.3v1.3h-1.3zM180.35 112.35h1.3v1.3h-1.3zM184.35 112.35h1.3v1.3h-1.3z" fill="#fbaad8"/><path d="M123.35 113.85h1.3v1.3h-1.3zM127.35 113.85h1.3v1.3h-1.3zM131.35 113.85h1.3v1.3h-1.3zM135.35 113.85h1.3v1.3h-1.3zM139.35 113.85h1.3v1.3h-1.3zM143.35 113.85h1.3v1.3h-1.3zM147.35 113.85h1.3v1.3h-1.3zM151.35 113.85h1.3v1.3h-1.3zM155.35 113.85h1.3v1.3h-1.3zM159.35 113.85h1.3v1.3h-1.3zM163.35 113.85h1.3v1.3h-1.3zM167.35 113.85h1.3v1.3h-1.3zM171.35 113.85h1.3v1.3h-1.3zM175.35 113.85h1.3v1.3h-1.3zM179.35 113.85h1.3v1.3h-1.3zM183.35 113.85h1.3v1.3h-1.3zM187.35 113.85h1.3v1.3h-1.3z" fill="#fbaad8"/><path d="M125.35 115.25h1.3v1.3h-1.3zM133.35 115.25h1.3v1.3h-1.3zM141.35 115.25h1.3v1.3h-1.3zM149.35 115.25h1.3v1.3h-1.3zM157.35 115.25h1.3v1.3h-1.3zM165.35 115.25h1.3v1.3h-1.3zM173.35 115.25h1.3v1.3h-1.3zM181.35 115.25h1.3v1.3h-1.3z" fill="#fbaad8"/><path d="M124.75 86.30h1.5v1.4h-1.5zM127.05 86.30h1.5v1.4h-1.5zM130.25 86.30h1.5v1.4h-1.5zM132.55 86.30h1.5v1.4h-1.5zM134.85 86.30h1.5v1.4h-1.5z" fill="#fbaad8"/><path d="M140.65 86.30h1.5v1.4h-1.5zM142.95 86.30h1.5v1.4h-1.5zM146.15 86.30h1.5v1.4h-1.5zM148.45 86.30h1.5v1.4h-1.5zM150.75 86.30h1.5v1.4h-1.5z" fill="#fbaad8"/><path d="M156.55 86.30h1.5v1.4h-1.5zM158.85 86.30h1.5v1.4h-1.5zM162.05 86.30h1.5v1.4h-1.5zM164.35 86.30h1.5v1.4h-1.5zM166.65 86.30h1.5v1.4h-1.5z" fill="#fbaad8"/><path d="M172.45 86.30h1.5v1.4h-1.5zM174.75 86.30h1.5v1.4h-1.5zM177.95 86.30h1.5v1.4h-1.5zM180.25 86.30h1.5v1.4h-1.5zM182.55 86.30h1.5v1.4h-1.5z" fill="#fbaad8"/><path d="M201.38 92.65h1.5v1.5h-1.5zM217.32 92.65h1.5v1.5h-1.5zM233.25 92.65h1.5v1.5h-1.5zM249.19 92.65h1.5v1.5h-1.5zM265.12 92.65h1.5v1.5h-1.5zM281.05 92.65h1.5v1.5h-1.5z" fill="#fbaad8"/><path d="M191.25 104.05h1.5v1.5h-1.5zM207.18 104.05h1.5v1.5h-1.5zM223.12 104.05h1.5v1.5h-1.5zM239.05 104.05h1.5v1.5h-1.5zM254.99 104.05h1.5v1.5h-1.5zM270.92 104.05h1.5v1.5h-1.5zM286.85 104.05h1.5v1.5h-1.5z" fill="#fbaad8"/><rect x="188.00" y="106.65" width="109.60" height="2.3" fill="#fbaad8"/><path d="M191.25 111.25h1.3v1.3h-1.3zM195.23 111.25h1.3v1.3h-1.3zM199.22 111.25h1.3v1.3h-1.3zM203.20 111.25h1.3v1.3h-1.3zM207.18 111.25h1.3v1.3h-1.3zM211.17 111.25h1.3v1.3h-1.3zM215.15 111.25h1.3v1.3h-1.3zM219.13 111.25h1.3v1.3h-1.3zM223.12 111.25h1.3v1.3h-1.3zM227.10 111.25h1.3v1.3h-1.3zM231.08 111.25h1.3v1.3h-1.3zM235.07 111.25h1.3v1.3h-1.3zM239.05 111.25h1.3v1.3h-1.3zM243.04 111.25h1.3v1.3h-1.3zM247.02 111.25h1.3v1.3h-1.3zM251.00 111.25h1.3v1.3h-1.3zM254.99 111.25h1.3v1.3h-1.3zM258.97 111.25h1.3v1.3h-1.3zM262.95 111.25h1.3v1.3h-1.3zM266.94 111.25h1.3v1.3h-1.3zM270.92 111.25h1.3v1.3h-1.3zM274.90 111.25h1.3v1.3h-1.3zM278.89 111.25h1.3v1.3h-1.3zM282.87 111.25h1.3v1.3h-1.3zM286.85 111.25h1.3v1.3h-1.3zM290.84 111.25h1.3v1.3h-1.3zM294.82 111.25h1.3v1.3h-1.3z" fill="#fbaad8"/><path d="M200.55 113.85h1.3v1.3h-1.3zM216.48 113.85h1.3v1.3h-1.3zM232.42 113.85h1.3v1.3h-1.3zM248.35 113.85h1.3v1.3h-1.3zM264.29 113.85h1.3v1.3h-1.3zM280.22 113.85h1.3v1.3h-1.3zM296.15 113.85h1.3v1.3h-1.3z" fill="#fbaad8"/><path d="M315.80 101.70h1.4v1.4h-1.4zM318.35 101.70h1.4v1.4h-1.4zM320.90 101.70h1.4v1.4h-1.4zM323.45 101.70h1.4v1.4h-1.4zM328.90 101.70h1.4v1.4h-1.4zM331.50 101.70h1.4v1.4h-1.4zM334.10 101.70h1.4v1.4h-1.4zM336.70 101.70h1.4v1.4h-1.4zM339.30 101.70h1.4v1.4h-1.4zM345.00 101.70h1.4v1.4h-1.4z" fill="#fbaad8"/><path d="M312.95 110.85h1.3v1.7h-1.3zM315.45 110.85h1.3v1.7h-1.3zM317.95 110.85h1.3v1.7h-1.3zM320.45 110.85h1.3v1.7h-1.3z" fill="#fbaad8"/><path d="M312.95 113.45h1.3v1.7h-1.3zM315.45 113.45h1.3v1.7h-1.3zM317.95 113.45h1.3v1.7h-1.3zM320.45 113.45h1.3v1.7h-1.3z" fill="#fbaad8"/><path d="M323.55 110.85h1.3v1.7h-1.3zM326.05 110.85h1.3v1.7h-1.3zM328.55 110.85h1.3v1.7h-1.3zM331.05 110.85h1.3v1.7h-1.3z" fill="#fbaad8"/><path d="M323.55 113.45h1.3v1.7h-1.3zM326.05 113.45h1.3v1.7h-1.3zM328.55 113.45h1.3v1.7h-1.3zM331.05 113.45h1.3v1.7h-1.3z" fill="#fbaad8"/><path d="M334.15 110.85h1.3v1.7h-1.3zM336.65 110.85h1.3v1.7h-1.3zM339.15 110.85h1.3v1.7h-1.3zM341.65 110.85h1.3v1.7h-1.3z" fill="#fbaad8"/><path d="M334.15 113.45h1.3v1.7h-1.3zM336.65 113.45h1.3v1.7h-1.3zM339.15 113.45h1.3v1.7h-1.3zM341.65 113.45h1.3v1.7h-1.3z" fill="#fbaad8"/><path d="M349.05 86.30h1.5v1.4h-1.5zM353.25 86.30h1.5v1.4h-1.5zM357.75 86.30h1.5v1.4h-1.5z" fill="#fbaad8"/><path d="M346.35 92.65h1.5v1.5h-1.5zM354.25 92.65h1.5v1.5h-1.5z" fill="#fbaad8"/><path d="M350.75 104.05h1.5v1.5h-1.5z" fill="#fbaad8"/><rect x="345.40" y="106.65" width="16.30" height="2.3" fill="#fbaad8"/><path d="M345.35 110.85h1.3v1.3h-1.3zM349.35 110.85h1.3v1.3h-1.3zM353.35 110.85h1.3v1.3h-1.3zM357.35 110.85h1.3v1.3h-1.3z" fill="#fbaad8"/><path d="M347.35 112.35h1.3v1.3h-1.3zM351.35 112.35h1.3v1.3h-1.3zM355.35 112.35h1.3v1.3h-1.3zM359.35 112.35h1.3v1.3h-1.3z" fill="#fbaad8"/><path d="M346.35 113.85h1.3v1.3h-1.3zM350.35 113.85h1.3v1.3h-1.3zM354.35 113.85h1.3v1.3h-1.3zM358.35 113.85h1.3v1.3h-1.3z" fill="#fbaad8"/><path d="M348.35 115.25h1.3v1.3h-1.3zM356.35 115.25h1.3v1.3h-1.3z" fill="#fbaad8"/><path d="M377.15 92.65h1.5v1.5h-1.5zM393.08 92.65h1.5v1.5h-1.5zM409.02 92.65h1.5v1.5h-1.5zM424.95 92.65h1.5v1.5h-1.5zM440.89 92.65h1.5v1.5h-1.5zM456.82 92.65h1.5v1.5h-1.5zM472.75 92.65h1.5v1.5h-1.5zM488.69 92.65h1.5v1.5h-1.5zM504.62 92.65h1.5v1.5h-1.5zM520.56 92.65h1.5v1.5h-1.5zM536.49 92.65h1.5v1.5h-1.5z" fill="#fbaad8"/><path d="M382.95 104.05h1.5v1.5h-1.5zM398.88 104.05h1.5v1.5h-1.5zM414.82 104.05h1.5v1.5h-1.5zM430.75 104.05h1.5v1.5h-1.5zM446.69 104.05h1.5v1.5h-1.5zM462.62 104.05h1.5v1.5h-1.5zM478.55 104.05h1.5v1.5h-1.5zM494.49 104.05h1.5v1.5h-1.5zM510.42 104.05h1.5v1.5h-1.5zM526.36 104.05h1.5v1.5h-1.5zM542.29 104.05h1.5v1.5h-1.5z" fill="#fbaad8"/><rect x="377.40" y="106.65" width="175.40" height="2.3" fill="#fbaad8"/><path d="M380.65 111.25h1.3v1.3h-1.3zM384.63 111.25h1.3v1.3h-1.3zM388.62 111.25h1.3v1.3h-1.3zM392.60 111.25h1.3v1.3h-1.3zM396.58 111.25h1.3v1.3h-1.3zM400.57 111.25h1.3v1.3h-1.3zM404.55 111.25h1.3v1.3h-1.3zM408.53 111.25h1.3v1.3h-1.3zM412.52 111.25h1.3v1.3h-1.3zM416.50 111.25h1.3v1.3h-1.3zM420.48 111.25h1.3v1.3h-1.3zM424.47 111.25h1.3v1.3h-1.3zM428.45 111.25h1.3v1.3h-1.3zM432.44 111.25h1.3v1.3h-1.3zM436.42 111.25h1.3v1.3h-1.3zM440.40 111.25h1.3v1.3h-1.3zM444.39 111.25h1.3v1.3h-1.3zM448.37 111.25h1.3v1.3h-1.3zM452.35 111.25h1.3v1.3h-1.3zM456.34 111.25h1.3v1.3h-1.3zM460.32 111.25h1.3v1.3h-1.3zM464.30 111.25h1.3v1.3h-1.3zM468.29 111.25h1.3v1.3h-1.3zM472.27 111.25h1.3v1.3h-1.3zM476.25 111.25h1.3v1.3h-1.3zM480.24 111.25h1.3v1.3h-1.3zM484.22 111.25h1.3v1.3h-1.3zM488.20 111.25h1.3v1.3h-1.3zM492.19 111.25h1.3v1.3h-1.3zM496.17 111.25h1.3v1.3h-1.3zM500.15 111.25h1.3v1.3h-1.3zM504.14 111.25h1.3v1.3h-1.3zM508.12 111.25h1.3v1.3h-1.3zM512.11 111.25h1.3v1.3h-1.3zM516.09 111.25h1.3v1.3h-1.3zM520.07 111.25h1.3v1.3h-1.3zM524.06 111.25h1.3v1.3h-1.3zM528.04 111.25h1.3v1.3h-1.3zM532.02 111.25h1.3v1.3h-1.3zM536.01 111.25h1.3v1.3h-1.3zM539.99 111.25h1.3v1.3h-1.3zM543.97 111.25h1.3v1.3h-1.3zM547.96 111.25h1.3v1.3h-1.3z" fill="#fbaad8"/><path d="M392.25 113.85h1.3v1.3h-1.3zM408.18 113.85h1.3v1.3h-1.3zM424.12 113.85h1.3v1.3h-1.3zM440.05 113.85h1.3v1.3h-1.3zM455.99 113.85h1.3v1.3h-1.3zM471.92 113.85h1.3v1.3h-1.3zM487.85 113.85h1.3v1.3h-1.3zM503.79 113.85h1.3v1.3h-1.3zM519.72 113.85h1.3v1.3h-1.3zM535.66 113.85h1.3v1.3h-1.3zM551.59 113.85h1.3v1.3h-1.3z" fill="#fbaad8"/><path d="M570.40 101.70h1.4v1.4h-1.4zM572.95 101.70h1.4v1.4h-1.4zM575.50 101.70h1.4v1.4h-1.4zM578.05 101.70h1.4v1.4h-1.4zM583.50 101.70h1.4v1.4h-1.4zM586.10 101.70h1.4v1.4h-1.4zM588.70 101.70h1.4v1.4h-1.4zM591.30 101.70h1.4v1.4h-1.4zM593.90 101.70h1.4v1.4h-1.4zM599.60 101.70h1.4v1.4h-1.4z" fill="#fbaad8"/><path d="M567.55 110.85h1.3v1.7h-1.3zM570.05 110.85h1.3v1.7h-1.3zM572.55 110.85h1.3v1.7h-1.3zM575.05 110.85h1.3v1.7h-1.3z" fill="#fbaad8"/><path d="M567.55 113.45h1.3v1.7h-1.3zM570.05 113.45h1.3v1.7h-1.3zM572.55 113.45h1.3v1.7h-1.3zM575.05 113.45h1.3v1.7h-1.3z" fill="#fbaad8"/><path d="M578.15 110.85h1.3v1.7h-1.3zM580.65 110.85h1.3v1.7h-1.3zM583.15 110.85h1.3v1.7h-1.3zM585.65 110.85h1.3v1.7h-1.3z" fill="#fbaad8"/><path d="M578.15 113.45h1.3v1.7h-1.3zM580.65 113.45h1.3v1.7h-1.3zM583.15 113.45h1.3v1.7h-1.3zM585.65 113.45h1.3v1.7h-1.3z" fill="#fbaad8"/><path d="M588.75 110.85h1.3v1.7h-1.3zM591.25 110.85h1.3v1.7h-1.3zM593.75 110.85h1.3v1.7h-1.3zM596.25 110.85h1.3v1.7h-1.3z" fill="#fbaad8"/><path d="M588.75 113.45h1.3v1.7h-1.3zM591.25 113.45h1.3v1.7h-1.3zM593.75 113.45h1.3v1.7h-1.3zM596.25 113.45h1.3v1.7h-1.3z" fill="#fbaad8"/><path d="M615.75 92.65h1.5v1.5h-1.5zM631.68 92.65h1.5v1.5h-1.5zM647.62 92.65h1.5v1.5h-1.5zM663.55 92.65h1.5v1.5h-1.5zM679.49 92.65h1.5v1.5h-1.5zM695.42 92.65h1.5v1.5h-1.5zM711.35 92.65h1.5v1.5h-1.5zM727.29 92.65h1.5v1.5h-1.5zM743.22 92.65h1.5v1.5h-1.5zM759.16 92.65h1.5v1.5h-1.5zM775.09 92.65h1.5v1.5h-1.5zM791.02 92.65h1.5v1.5h-1.5z" fill="#fbaad8"/><path d="M621.55 104.05h1.5v1.5h-1.5zM637.48 104.05h1.5v1.5h-1.5zM653.42 104.05h1.5v1.5h-1.5zM669.35 104.05h1.5v1.5h-1.5zM685.29 104.05h1.5v1.5h-1.5zM701.22 104.05h1.5v1.5h-1.5zM717.15 104.05h1.5v1.5h-1.5zM733.09 104.05h1.5v1.5h-1.5zM749.02 104.05h1.5v1.5h-1.5zM764.96 104.05h1.5v1.5h-1.5zM780.89 104.05h1.5v1.5h-1.5zM796.82 104.05h1.5v1.5h-1.5z" fill="#fbaad8"/><rect x="616.00" y="106.65" width="184.00" height="2.3" fill="#fbaad8"/><path d="M619.25 111.25h1.3v1.3h-1.3zM623.23 111.25h1.3v1.3h-1.3zM627.22 111.25h1.3v1.3h-1.3zM631.20 111.25h1.3v1.3h-1.3zM635.18 111.25h1.3v1.3h-1.3zM639.17 111.25h1.3v1.3h-1.3zM643.15 111.25h1.3v1.3h-1.3zM647.13 111.25h1.3v1.3h-1.3zM651.12 111.25h1.3v1.3h-1.3zM655.10 111.25h1.3v1.3h-1.3zM659.09 111.25h1.3v1.3h-1.3zM663.07 111.25h1.3v1.3h-1.3zM667.05 111.25h1.3v1.3h-1.3zM671.04 111.25h1.3v1.3h-1.3zM675.02 111.25h1.3v1.3h-1.3zM679.00 111.25h1.3v1.3h-1.3zM682.99 111.25h1.3v1.3h-1.3zM686.97 111.25h1.3v1.3h-1.3zM690.95 111.25h1.3v1.3h-1.3zM694.94 111.25h1.3v1.3h-1.3zM698.92 111.25h1.3v1.3h-1.3zM702.90 111.25h1.3v1.3h-1.3zM706.89 111.25h1.3v1.3h-1.3zM710.87 111.25h1.3v1.3h-1.3zM714.85 111.25h1.3v1.3h-1.3zM718.84 111.25h1.3v1.3h-1.3zM722.82 111.25h1.3v1.3h-1.3zM726.80 111.25h1.3v1.3h-1.3zM730.79 111.25h1.3v1.3h-1.3zM734.77 111.25h1.3v1.3h-1.3zM738.76 111.25h1.3v1.3h-1.3zM742.74 111.25h1.3v1.3h-1.3zM746.72 111.25h1.3v1.3h-1.3zM750.71 111.25h1.3v1.3h-1.3zM754.69 111.25h1.3v1.3h-1.3zM758.67 111.25h1.3v1.3h-1.3zM762.66 111.25h1.3v1.3h-1.3zM766.64 111.25h1.3v1.3h-1.3zM770.62 111.25h1.3v1.3h-1.3zM774.61 111.25h1.3v1.3h-1.3zM778.59 111.25h1.3v1.3h-1.3zM782.57 111.25h1.3v1.3h-1.3zM786.56 111.25h1.3v1.3h-1.3zM790.54 111.25h1.3v1.3h-1.3zM794.52 111.25h1.3v1.3h-1.3zM798.51 111.25h1.3v1.3h-1.3z" fill="#fbaad8"/><path d="M630.85 113.85h1.3v1.3h-1.3zM646.78 113.85h1.3v1.3h-1.3zM662.72 113.85h1.3v1.3h-1.3zM678.65 113.85h1.3v1.3h-1.3zM694.59 113.85h1.3v1.3h-1.3zM710.52 113.85h1.3v1.3h-1.3zM726.45 113.85h1.3v1.3h-1.3zM742.39 113.85h1.3v1.3h-1.3zM758.32 113.85h1.3v1.3h-1.3zM774.26 113.85h1.3v1.3h-1.3zM790.19 113.85h1.3v1.3h-1.3z" fill="#fbaad8"/><rect x="313.20" y="124.85" width="31.50" height="1.5" fill="#dca6de"/><rect x="569.00" y="124.85" width="30.60" height="1.5" fill="#dca6de"/><path d="M327.30 166.70h1.8v1.8h-1.8zM342.90 166.70h1.8v1.8h-1.8z" fill="#dcaaf9"/><path d="M581.90 166.70h1.8v1.8h-1.8zM597.90 166.70h1.8v1.8h-1.8z" fill="#dcaaf9"/><rect x="345.80" y="198.70" width="32.80" height="1.4" fill="#a9b9ee"/><rect x="568.00" y="198.70" width="33.80" height="1.4" fill="#a9b9ee"/><path d="M297.30 221.10h1.6v1.6h-1.6z" fill="#c4e8ee"/><path d="M302.45 231.55h1.5v1.5h-1.5z" fill="#c4e8ee"/><rect x="297.00" y="234.05" width="16.50" height="1.9" fill="#c4e8ee"/><path d="M298.75 238.45h1.3v1.3h-1.3zM302.35 238.45h1.3v1.3h-1.3zM307.35 238.45h1.3v1.3h-1.3zM310.85 238.45h1.3v1.3h-1.3z" fill="#c4e8ee"/><path d="M302.35 239.85h1.3v1.3h-1.3zM309.95 239.85h1.3v1.3h-1.3zM311.75 239.85h1.3v1.3h-1.3z" fill="#c4e8ee"/><path d="M305.55 241.55h1.3v1.3h-1.3zM312.35 241.55h1.3v1.3h-1.3z" fill="#c4e8ee"/><path d="M361.80 221.10h1.6v1.6h-1.6z" fill="#c4e8ee"/><path d="M366.95 231.55h1.5v1.5h-1.5z" fill="#c4e8ee"/><rect x="361.50" y="234.05" width="16.50" height="1.9" fill="#c4e8ee"/><path d="M363.25 238.45h1.3v1.3h-1.3zM366.85 238.45h1.3v1.3h-1.3zM371.85 238.45h1.3v1.3h-1.3zM375.35 238.45h1.3v1.3h-1.3z" fill="#c4e8ee"/><path d="M366.85 239.85h1.3v1.3h-1.3zM374.45 239.85h1.3v1.3h-1.3zM376.25 239.85h1.3v1.3h-1.3z" fill="#c4e8ee"/><path d="M370.05 241.55h1.3v1.3h-1.3zM376.85 241.55h1.3v1.3h-1.3z" fill="#c4e8ee"/><path d="M553.20 221.10h1.6v1.6h-1.6z" fill="#c4e8ee"/><path d="M558.35 231.55h1.5v1.5h-1.5z" fill="#c4e8ee"/><rect x="552.90" y="234.05" width="16.50" height="1.9" fill="#c4e8ee"/><path d="M554.65 238.45h1.3v1.3h-1.3zM558.25 238.45h1.3v1.3h-1.3zM563.25 238.45h1.3v1.3h-1.3zM566.75 238.45h1.3v1.3h-1.3z" fill="#c4e8ee"/><path d="M558.25 239.85h1.3v1.3h-1.3zM565.85 239.85h1.3v1.3h-1.3zM567.65 239.85h1.3v1.3h-1.3z" fill="#c4e8ee"/><path d="M561.45 241.55h1.3v1.3h-1.3zM568.25 241.55h1.3v1.3h-1.3z" fill="#c4e8ee"/><path d="M600.60 221.10h1.6v1.6h-1.6z" fill="#c4e8ee"/><path d="M605.75 231.55h1.5v1.5h-1.5z" fill="#c4e8ee"/><rect x="600.30" y="234.05" width="16.50" height="1.9" fill="#c4e8ee"/><path d="M602.05 238.45h1.3v1.3h-1.3zM605.65 238.45h1.3v1.3h-1.3zM610.65 238.45h1.3v1.3h-1.3zM614.15 238.45h1.3v1.3h-1.3z" fill="#c4e8ee"/><path d="M605.65 239.85h1.3v1.3h-1.3zM613.25 239.85h1.3v1.3h-1.3zM615.05 239.85h1.3v1.3h-1.3z" fill="#c4e8ee"/><path d="M608.85 241.55h1.3v1.3h-1.3zM615.65 241.55h1.3v1.3h-1.3z" fill="#c4e8ee"/><path d="M185.55 260.10h0.9v3.4h-0.9zM187.05 260.10h0.9v3.4h-0.9zM188.55 260.10h0.9v3.4h-0.9zM194.05 260.10h0.9v3.4h-0.9zM195.55 260.10h0.9v3.4h-0.9zM197.05 260.10h0.9v3.4h-0.9zM198.55 260.10h0.9v3.4h-0.9zM200.05 260.10h0.9v3.4h-0.9z" fill="rgba(190,240,215,0.50)"/><path d="M190.05 258.70h0.9v4.8h-0.9zM191.55 258.70h0.9v4.8h-0.9z" fill="rgba(190,240,215,0.50)"/><path d="M186.10 264.15h1.2v0.9h-1.2zM187.60 264.15h1.2v0.9h-1.2zM189.10 264.15h1.2v0.9h-1.2zM192.70 264.15h1.2v0.9h-1.2zM194.60 264.15h1.2v0.9h-1.2zM196.10 264.15h1.2v0.9h-1.2zM197.60 264.15h1.2v0.9h-1.2zM199.10 264.15h1.2v0.9h-1.2z" fill="rgba(190,240,215,0.50)"/><path d="M188.95 267.75h1.1v0.9h-1.1zM189.95 267.75h1.1v0.9h-1.1zM192.95 267.75h1.1v0.9h-1.1zM193.95 267.75h1.1v0.9h-1.1zM196.95 267.75h1.1v0.9h-1.1zM197.95 267.75h1.1v0.9h-1.1z" fill="rgba(190,240,215,0.50)"/><path d="M190.95 266.55h1.1v0.9h-1.1zM191.95 266.55h1.1v0.9h-1.1zM194.95 266.55h1.1v0.9h-1.1zM195.95 266.55h1.1v0.9h-1.1zM198.95 266.55h1.1v0.9h-1.1z" fill="rgba(190,240,215,0.50)"/><path d="M186.05 269.70h1.1v1h-1.1zM187.75 269.70h1.1v1h-1.1z" fill="rgba(190,240,215,0.50)"/><path d="M201.48 260.10h0.9v3.4h-0.9zM202.98 260.10h0.9v3.4h-0.9zM204.48 260.10h0.9v3.4h-0.9zM209.98 260.10h0.9v3.4h-0.9zM211.48 260.10h0.9v3.4h-0.9zM212.98 260.10h0.9v3.4h-0.9zM214.48 260.10h0.9v3.4h-0.9zM215.98 260.10h0.9v3.4h-0.9z" fill="rgba(190,240,215,0.50)"/><path d="M205.98 258.70h0.9v4.8h-0.9zM207.48 258.70h0.9v4.8h-0.9z" fill="rgba(190,240,215,0.50)"/><path d="M202.03 264.15h1.2v0.9h-1.2zM203.53 264.15h1.2v0.9h-1.2zM205.03 264.15h1.2v0.9h-1.2zM208.63 264.15h1.2v0.9h-1.2zM210.53 264.15h1.2v0.9h-1.2zM212.03 264.15h1.2v0.9h-1.2zM213.53 264.15h1.2v0.9h-1.2zM215.03 264.15h1.2v0.9h-1.2z" fill="rgba(190,240,215,0.50)"/><path d="M204.88 267.75h1.1v0.9h-1.1zM205.88 267.75h1.1v0.9h-1.1zM208.88 267.75h1.1v0.9h-1.1zM209.88 267.75h1.1v0.9h-1.1zM212.88 267.75h1.1v0.9h-1.1zM213.88 267.75h1.1v0.9h-1.1z" fill="rgba(190,240,215,0.50)"/><path d="M206.88 266.55h1.1v0.9h-1.1zM207.88 266.55h1.1v0.9h-1.1zM210.88 266.55h1.1v0.9h-1.1zM211.88 266.55h1.1v0.9h-1.1zM214.88 266.55h1.1v0.9h-1.1z" fill="rgba(190,240,215,0.50)"/><path d="M201.98 269.70h1.1v1h-1.1zM203.68 269.70h1.1v1h-1.1z" fill="rgba(190,240,215,0.50)"/><path d="M217.42 260.10h0.9v3.4h-0.9zM218.92 260.10h0.9v3.4h-0.9zM220.42 260.10h0.9v3.4h-0.9zM225.92 260.10h0.9v3.4h-0.9zM227.42 260.10h0.9v3.4h-0.9zM228.92 260.10h0.9v3.4h-0.9zM230.42 260.10h0.9v3.4h-0.9zM231.92 260.10h0.9v3.4h-0.9z" fill="rgba(190,240,215,0.50)"/><path d="M221.92 258.70h0.9v4.8h-0.9zM223.42 258.70h0.9v4.8h-0.9z" fill="rgba(190,240,215,0.50)"/><path d="M217.97 264.15h1.2v0.9h-1.2zM219.47 264.15h1.2v0.9h-1.2zM220.97 264.15h1.2v0.9h-1.2zM224.57 264.15h1.2v0.9h-1.2zM226.47 264.15h1.2v0.9h-1.2zM227.97 264.15h1.2v0.9h-1.2zM229.47 264.15h1.2v0.9h-1.2zM230.97 264.15h1.2v0.9h-1.2z" fill="rgba(190,240,215,0.50)"/><path d="M220.82 267.75h1.1v0.9h-1.1zM221.82 267.75h1.1v0.9h-1.1zM224.82 267.75h1.1v0.9h-1.1zM225.82 267.75h1.1v0.9h-1.1zM228.82 267.75h1.1v0.9h-1.1zM229.82 267.75h1.1v0.9h-1.1z" fill="rgba(190,240,215,0.50)"/><path d="M222.82 266.55h1.1v0.9h-1.1zM223.82 266.55h1.1v0.9h-1.1zM226.82 266.55h1.1v0.9h-1.1zM227.82 266.55h1.1v0.9h-1.1zM230.82 266.55h1.1v0.9h-1.1z" fill="rgba(190,240,215,0.50)"/><path d="M217.92 269.70h1.1v1h-1.1zM219.62 269.70h1.1v1h-1.1z" fill="rgba(190,240,215,0.50)"/><path d="M233.35 260.10h0.9v3.4h-0.9zM234.85 260.10h0.9v3.4h-0.9zM236.35 260.10h0.9v3.4h-0.9zM241.85 260.10h0.9v3.4h-0.9zM243.35 260.10h0.9v3.4h-0.9zM244.85 260.10h0.9v3.4h-0.9zM246.35 260.10h0.9v3.4h-0.9zM247.85 260.10h0.9v3.4h-0.9z" fill="rgba(190,240,215,0.50)"/><path d="M237.85 258.70h0.9v4.8h-0.9zM239.35 258.70h0.9v4.8h-0.9z" fill="rgba(190,240,215,0.50)"/><path d="M233.90 264.15h1.2v0.9h-1.2zM235.40 264.15h1.2v0.9h-1.2zM236.90 264.15h1.2v0.9h-1.2zM240.50 264.15h1.2v0.9h-1.2zM242.40 264.15h1.2v0.9h-1.2zM243.90 264.15h1.2v0.9h-1.2zM245.40 264.15h1.2v0.9h-1.2zM246.90 264.15h1.2v0.9h-1.2z" fill="rgba(190,240,215,0.50)"/><path d="M236.75 267.75h1.1v0.9h-1.1zM237.75 267.75h1.1v0.9h-1.1zM240.75 267.75h1.1v0.9h-1.1zM241.75 267.75h1.1v0.9h-1.1zM244.75 267.75h1.1v0.9h-1.1zM245.75 267.75h1.1v0.9h-1.1z" fill="rgba(190,240,215,0.50)"/><path d="M238.75 266.55h1.1v0.9h-1.1zM239.75 266.55h1.1v0.9h-1.1zM242.75 266.55h1.1v0.9h-1.1zM243.75 266.55h1.1v0.9h-1.1zM246.75 266.55h1.1v0.9h-1.1z" fill="rgba(190,240,215,0.50)"/><path d="M233.85 269.70h1.1v1h-1.1zM235.55 269.70h1.1v1h-1.1z" fill="rgba(190,240,215,0.50)"/><path d="M249.29 260.10h0.9v3.4h-0.9zM250.79 260.10h0.9v3.4h-0.9zM252.29 260.10h0.9v3.4h-0.9zM257.79 260.10h0.9v3.4h-0.9zM259.29 260.10h0.9v3.4h-0.9zM260.79 260.10h0.9v3.4h-0.9zM262.29 260.10h0.9v3.4h-0.9zM263.79 260.10h0.9v3.4h-0.9z" fill="rgba(190,240,215,0.50)"/><path d="M253.79 258.70h0.9v4.8h-0.9zM255.29 258.70h0.9v4.8h-0.9z" fill="rgba(190,240,215,0.50)"/><path d="M249.84 264.15h1.2v0.9h-1.2zM251.34 264.15h1.2v0.9h-1.2zM252.84 264.15h1.2v0.9h-1.2zM256.44 264.15h1.2v0.9h-1.2zM258.34 264.15h1.2v0.9h-1.2zM259.84 264.15h1.2v0.9h-1.2zM261.34 264.15h1.2v0.9h-1.2zM262.84 264.15h1.2v0.9h-1.2z" fill="rgba(190,240,215,0.50)"/><path d="M252.69 267.75h1.1v0.9h-1.1zM253.69 267.75h1.1v0.9h-1.1zM256.69 267.75h1.1v0.9h-1.1zM257.69 267.75h1.1v0.9h-1.1zM260.69 267.75h1.1v0.9h-1.1zM261.69 267.75h1.1v0.9h-1.1z" fill="rgba(190,240,215,0.50)"/><path d="M254.69 266.55h1.1v0.9h-1.1zM255.69 266.55h1.1v0.9h-1.1zM258.69 266.55h1.1v0.9h-1.1zM259.69 266.55h1.1v0.9h-1.1zM262.69 266.55h1.1v0.9h-1.1z" fill="rgba(190,240,215,0.50)"/><path d="M249.79 269.70h1.1v1h-1.1zM251.49 269.70h1.1v1h-1.1z" fill="rgba(190,240,215,0.50)"/><path d="M265.22 260.10h0.9v3.4h-0.9zM266.72 260.10h0.9v3.4h-0.9zM268.22 260.10h0.9v3.4h-0.9zM273.72 260.10h0.9v3.4h-0.9zM275.22 260.10h0.9v3.4h-0.9zM276.72 260.10h0.9v3.4h-0.9zM278.22 260.10h0.9v3.4h-0.9zM279.72 260.10h0.9v3.4h-0.9z" fill="rgba(190,240,215,0.50)"/><path d="M269.72 258.70h0.9v4.8h-0.9zM271.22 258.70h0.9v4.8h-0.9z" fill="rgba(190,240,215,0.50)"/><path d="M265.77 264.15h1.2v0.9h-1.2zM267.27 264.15h1.2v0.9h-1.2zM268.77 264.15h1.2v0.9h-1.2zM272.37 264.15h1.2v0.9h-1.2zM274.27 264.15h1.2v0.9h-1.2zM275.77 264.15h1.2v0.9h-1.2zM277.27 264.15h1.2v0.9h-1.2zM278.77 264.15h1.2v0.9h-1.2z" fill="rgba(190,240,215,0.50)"/><path d="M268.62 267.75h1.1v0.9h-1.1zM269.62 267.75h1.1v0.9h-1.1zM272.62 267.75h1.1v0.9h-1.1zM273.62 267.75h1.1v0.9h-1.1zM276.62 267.75h1.1v0.9h-1.1zM277.62 267.75h1.1v0.9h-1.1z" fill="rgba(190,240,215,0.50)"/><path d="M270.62 266.55h1.1v0.9h-1.1zM271.62 266.55h1.1v0.9h-1.1zM274.62 266.55h1.1v0.9h-1.1zM275.62 266.55h1.1v0.9h-1.1zM278.62 266.55h1.1v0.9h-1.1z" fill="rgba(190,240,215,0.50)"/><path d="M265.72 269.70h1.1v1h-1.1zM267.42 269.70h1.1v1h-1.1z" fill="rgba(190,240,215,0.50)"/><path d="M281.15 260.10h0.9v3.4h-0.9zM282.65 260.10h0.9v3.4h-0.9zM284.15 260.10h0.9v3.4h-0.9zM289.65 260.10h0.9v3.4h-0.9zM291.15 260.10h0.9v3.4h-0.9zM292.65 260.10h0.9v3.4h-0.9zM294.15 260.10h0.9v3.4h-0.9zM295.65 260.10h0.9v3.4h-0.9z" fill="rgba(190,240,215,0.50)"/><path d="M285.65 258.70h0.9v4.8h-0.9zM287.15 258.70h0.9v4.8h-0.9z" fill="rgba(190,240,215,0.50)"/><path d="M281.70 264.15h1.2v0.9h-1.2zM283.20 264.15h1.2v0.9h-1.2zM284.70 264.15h1.2v0.9h-1.2zM288.30 264.15h1.2v0.9h-1.2zM290.20 264.15h1.2v0.9h-1.2zM291.70 264.15h1.2v0.9h-1.2zM293.20 264.15h1.2v0.9h-1.2zM294.70 264.15h1.2v0.9h-1.2z" fill="rgba(190,240,215,0.50)"/><path d="M284.55 267.75h1.1v0.9h-1.1zM285.55 267.75h1.1v0.9h-1.1zM288.55 267.75h1.1v0.9h-1.1zM289.55 267.75h1.1v0.9h-1.1zM292.55 267.75h1.1v0.9h-1.1zM293.55 267.75h1.1v0.9h-1.1z" fill="rgba(190,240,215,0.50)"/><path d="M286.55 266.55h1.1v0.9h-1.1zM287.55 266.55h1.1v0.9h-1.1zM290.55 266.55h1.1v0.9h-1.1zM291.55 266.55h1.1v0.9h-1.1zM294.55 266.55h1.1v0.9h-1.1z" fill="rgba(190,240,215,0.50)"/><path d="M281.65 269.70h1.1v1h-1.1zM283.35 269.70h1.1v1h-1.1z" fill="rgba(190,240,215,0.50)"/><path d="M297.09 260.10h0.9v3.4h-0.9zM298.59 260.10h0.9v3.4h-0.9zM300.09 260.10h0.9v3.4h-0.9zM305.59 260.10h0.9v3.4h-0.9zM307.09 260.10h0.9v3.4h-0.9zM308.59 260.10h0.9v3.4h-0.9zM310.09 260.10h0.9v3.4h-0.9zM311.59 260.10h0.9v3.4h-0.9z" fill="rgba(190,240,215,0.50)"/><path d="M301.59 258.70h0.9v4.8h-0.9zM303.09 258.70h0.9v4.8h-0.9z" fill="rgba(190,240,215,0.50)"/><path d="M297.64 264.15h1.2v0.9h-1.2zM299.14 264.15h1.2v0.9h-1.2zM300.64 264.15h1.2v0.9h-1.2zM304.24 264.15h1.2v0.9h-1.2zM306.14 264.15h1.2v0.9h-1.2zM307.64 264.15h1.2v0.9h-1.2zM309.14 264.15h1.2v0.9h-1.2zM310.64 264.15h1.2v0.9h-1.2z" fill="rgba(190,240,215,0.50)"/><path d="M300.49 267.75h1.1v0.9h-1.1zM301.49 267.75h1.1v0.9h-1.1zM304.49 267.75h1.1v0.9h-1.1zM305.49 267.75h1.1v0.9h-1.1zM308.49 267.75h1.1v0.9h-1.1zM309.49 267.75h1.1v0.9h-1.1z" fill="rgba(190,240,215,0.50)"/><path d="M302.49 266.55h1.1v0.9h-1.1zM303.49 266.55h1.1v0.9h-1.1zM306.49 266.55h1.1v0.9h-1.1zM307.49 266.55h1.1v0.9h-1.1zM310.49 266.55h1.1v0.9h-1.1z" fill="rgba(190,240,215,0.50)"/><path d="M297.59 269.70h1.1v1h-1.1zM299.29 269.70h1.1v1h-1.1z" fill="rgba(190,240,215,0.50)"/><path d="M313.55 254.30h0.9v3.8h-0.9zM315.15 254.30h0.9v3.8h-0.9zM316.75 254.30h0.9v3.8h-0.9zM318.35 254.30h0.9v3.8h-0.9zM319.95 254.30h0.9v3.8h-0.9zM321.55 254.30h0.9v3.8h-0.9zM323.15 254.30h0.9v3.8h-0.9zM324.75 254.30h0.9v3.8h-0.9z" fill="rgba(190,240,215,0.50)"/><rect x="314.00" y="258.05" width="13.00" height="0.9" fill="rgba(190,240,215,0.50)"/><path d="M314.20 261.35h1.6v0.9h-1.6zM316.20 261.35h1.6v0.9h-1.6zM320.20 261.35h1.6v0.9h-1.6zM323.20 261.35h1.6v0.9h-1.6zM325.20 261.35h1.6v0.9h-1.6z" fill="rgba(190,240,215,0.50)"/><path d="M314.85 263.35h1.3v0.9h-1.3zM318.35 263.35h1.3v0.9h-1.3zM324.85 263.35h1.3v0.9h-1.3z" fill="rgba(190,240,215,0.50)"/><path d="M329.55 254.30h0.9v3.8h-0.9zM331.15 254.30h0.9v3.8h-0.9zM332.75 254.30h0.9v3.8h-0.9zM334.35 254.30h0.9v3.8h-0.9zM335.95 254.30h0.9v3.8h-0.9zM337.55 254.30h0.9v3.8h-0.9zM339.15 254.30h0.9v3.8h-0.9zM340.75 254.30h0.9v3.8h-0.9z" fill="rgba(190,240,215,0.50)"/><rect x="330.00" y="258.05" width="13.00" height="0.9" fill="rgba(190,240,215,0.50)"/><path d="M330.20 261.35h1.6v0.9h-1.6zM332.20 261.35h1.6v0.9h-1.6zM336.20 261.35h1.6v0.9h-1.6zM339.20 261.35h1.6v0.9h-1.6zM341.20 261.35h1.6v0.9h-1.6z" fill="rgba(190,240,215,0.50)"/><path d="M330.85 263.35h1.3v0.9h-1.3zM334.35 263.35h1.3v0.9h-1.3zM340.85 263.35h1.3v0.9h-1.3z" fill="rgba(190,240,215,0.50)"/><rect x="345.5" y="252" width="15.500" height="4.200" fill="rgba(200,245,225,0.36)"/><rect x="361.5" y="253" width="14.800" height="4.200" fill="rgba(200,245,225,0.36)"/><rect x="345.50" y="257.00" width="15.50" height="1.2" fill="rgba(200,245,225,0.58)"/><rect x="345.50" y="260.10" width="15.50" height="1.8" fill="rgba(200,245,225,0.58)"/><rect x="361.50" y="258.10" width="14.80" height="1.2" fill="rgba(200,245,225,0.58)"/><rect x="361.50" y="261.20" width="14.80" height="1.8" fill="rgba(200,245,225,0.58)"/><path d="M376.75 260.10h0.9v3.4h-0.9zM378.25 260.10h0.9v3.4h-0.9zM379.75 260.10h0.9v3.4h-0.9zM385.25 260.10h0.9v3.4h-0.9zM386.75 260.10h0.9v3.4h-0.9zM388.25 260.10h0.9v3.4h-0.9zM389.75 260.10h0.9v3.4h-0.9zM391.25 260.10h0.9v3.4h-0.9z" fill="rgba(190,240,215,0.50)"/><path d="M381.25 258.70h0.9v4.8h-0.9zM382.75 258.70h0.9v4.8h-0.9z" fill="rgba(190,240,215,0.50)"/><path d="M377.30 264.15h1.2v0.9h-1.2zM378.80 264.15h1.2v0.9h-1.2zM380.30 264.15h1.2v0.9h-1.2zM383.90 264.15h1.2v0.9h-1.2zM385.80 264.15h1.2v0.9h-1.2zM387.30 264.15h1.2v0.9h-1.2zM388.80 264.15h1.2v0.9h-1.2zM390.30 264.15h1.2v0.9h-1.2z" fill="rgba(190,240,215,0.50)"/><path d="M380.15 267.75h1.1v0.9h-1.1zM381.15 267.75h1.1v0.9h-1.1zM384.15 267.75h1.1v0.9h-1.1zM385.15 267.75h1.1v0.9h-1.1zM388.15 267.75h1.1v0.9h-1.1zM389.15 267.75h1.1v0.9h-1.1z" fill="rgba(190,240,215,0.50)"/><path d="M382.15 266.55h1.1v0.9h-1.1zM383.15 266.55h1.1v0.9h-1.1zM386.15 266.55h1.1v0.9h-1.1zM387.15 266.55h1.1v0.9h-1.1zM390.15 266.55h1.1v0.9h-1.1z" fill="rgba(190,240,215,0.50)"/><path d="M377.25 269.70h1.1v1h-1.1zM378.95 269.70h1.1v1h-1.1z" fill="rgba(190,240,215,0.50)"/><path d="M392.68 260.10h0.9v3.4h-0.9zM394.18 260.10h0.9v3.4h-0.9zM395.68 260.10h0.9v3.4h-0.9zM401.18 260.10h0.9v3.4h-0.9zM402.68 260.10h0.9v3.4h-0.9zM404.18 260.10h0.9v3.4h-0.9zM405.68 260.10h0.9v3.4h-0.9zM407.18 260.10h0.9v3.4h-0.9z" fill="rgba(190,240,215,0.50)"/><path d="M397.18 258.70h0.9v4.8h-0.9zM398.68 258.70h0.9v4.8h-0.9z" fill="rgba(190,240,215,0.50)"/><path d="M393.23 264.15h1.2v0.9h-1.2zM394.73 264.15h1.2v0.9h-1.2zM396.23 264.15h1.2v0.9h-1.2zM399.83 264.15h1.2v0.9h-1.2zM401.73 264.15h1.2v0.9h-1.2zM403.23 264.15h1.2v0.9h-1.2zM404.73 264.15h1.2v0.9h-1.2zM406.23 264.15h1.2v0.9h-1.2z" fill="rgba(190,240,215,0.50)"/><path d="M396.08 267.75h1.1v0.9h-1.1zM397.08 267.75h1.1v0.9h-1.1zM400.08 267.75h1.1v0.9h-1.1zM401.08 267.75h1.1v0.9h-1.1zM404.08 267.75h1.1v0.9h-1.1zM405.08 267.75h1.1v0.9h-1.1z" fill="rgba(190,240,215,0.50)"/><path d="M398.08 266.55h1.1v0.9h-1.1zM399.08 266.55h1.1v0.9h-1.1zM402.08 266.55h1.1v0.9h-1.1zM403.08 266.55h1.1v0.9h-1.1zM406.08 266.55h1.1v0.9h-1.1z" fill="rgba(190,240,215,0.50)"/><path d="M393.18 269.70h1.1v1h-1.1zM394.88 269.70h1.1v1h-1.1z" fill="rgba(190,240,215,0.50)"/><path d="M408.62 260.10h0.9v3.4h-0.9zM410.12 260.10h0.9v3.4h-0.9zM411.62 260.10h0.9v3.4h-0.9zM417.12 260.10h0.9v3.4h-0.9zM418.62 260.10h0.9v3.4h-0.9zM420.12 260.10h0.9v3.4h-0.9zM421.62 260.10h0.9v3.4h-0.9zM423.12 260.10h0.9v3.4h-0.9z" fill="rgba(190,240,215,0.50)"/><path d="M413.12 258.70h0.9v4.8h-0.9zM414.62 258.70h0.9v4.8h-0.9z" fill="rgba(190,240,215,0.50)"/><path d="M409.17 264.15h1.2v0.9h-1.2zM410.67 264.15h1.2v0.9h-1.2zM412.17 264.15h1.2v0.9h-1.2zM415.77 264.15h1.2v0.9h-1.2zM417.67 264.15h1.2v0.9h-1.2zM419.17 264.15h1.2v0.9h-1.2zM420.67 264.15h1.2v0.9h-1.2zM422.17 264.15h1.2v0.9h-1.2z" fill="rgba(190,240,215,0.50)"/><path d="M412.02 267.75h1.1v0.9h-1.1zM413.02 267.75h1.1v0.9h-1.1zM416.02 267.75h1.1v0.9h-1.1zM417.02 267.75h1.1v0.9h-1.1zM420.02 267.75h1.1v0.9h-1.1zM421.02 267.75h1.1v0.9h-1.1z" fill="rgba(190,240,215,0.50)"/><path d="M414.02 266.55h1.1v0.9h-1.1zM415.02 266.55h1.1v0.9h-1.1zM418.02 266.55h1.1v0.9h-1.1zM419.02 266.55h1.1v0.9h-1.1zM422.02 266.55h1.1v0.9h-1.1z" fill="rgba(190,240,215,0.50)"/><path d="M409.12 269.70h1.1v1h-1.1zM410.82 269.70h1.1v1h-1.1z" fill="rgba(190,240,215,0.50)"/><path d="M424.55 260.10h0.9v3.4h-0.9zM426.05 260.10h0.9v3.4h-0.9zM427.55 260.10h0.9v3.4h-0.9zM433.05 260.10h0.9v3.4h-0.9zM434.55 260.10h0.9v3.4h-0.9zM436.05 260.10h0.9v3.4h-0.9zM437.55 260.10h0.9v3.4h-0.9zM439.05 260.10h0.9v3.4h-0.9z" fill="rgba(190,240,215,0.50)"/><path d="M429.05 258.70h0.9v4.8h-0.9zM430.55 258.70h0.9v4.8h-0.9z" fill="rgba(190,240,215,0.50)"/><path d="M425.10 264.15h1.2v0.9h-1.2zM426.60 264.15h1.2v0.9h-1.2zM428.10 264.15h1.2v0.9h-1.2zM431.70 264.15h1.2v0.9h-1.2zM433.60 264.15h1.2v0.9h-1.2zM435.10 264.15h1.2v0.9h-1.2zM436.60 264.15h1.2v0.9h-1.2zM438.10 264.15h1.2v0.9h-1.2z" fill="rgba(190,240,215,0.50)"/><path d="M427.95 267.75h1.1v0.9h-1.1zM428.95 267.75h1.1v0.9h-1.1zM431.95 267.75h1.1v0.9h-1.1zM432.95 267.75h1.1v0.9h-1.1zM435.95 267.75h1.1v0.9h-1.1zM436.95 267.75h1.1v0.9h-1.1z" fill="rgba(190,240,215,0.50)"/><path d="M429.95 266.55h1.1v0.9h-1.1zM430.95 266.55h1.1v0.9h-1.1zM433.95 266.55h1.1v0.9h-1.1zM434.95 266.55h1.1v0.9h-1.1zM437.95 266.55h1.1v0.9h-1.1z" fill="rgba(190,240,215,0.50)"/><path d="M425.05 269.70h1.1v1h-1.1zM426.75 269.70h1.1v1h-1.1z" fill="rgba(190,240,215,0.50)"/><path d="M440.49 260.10h0.9v3.4h-0.9zM441.99 260.10h0.9v3.4h-0.9zM443.49 260.10h0.9v3.4h-0.9zM448.99 260.10h0.9v3.4h-0.9zM450.49 260.10h0.9v3.4h-0.9zM451.99 260.10h0.9v3.4h-0.9zM453.49 260.10h0.9v3.4h-0.9zM454.99 260.10h0.9v3.4h-0.9z" fill="rgba(190,240,215,0.50)"/><path d="M444.99 258.70h0.9v4.8h-0.9zM446.49 258.70h0.9v4.8h-0.9z" fill="rgba(190,240,215,0.50)"/><path d="M441.04 264.15h1.2v0.9h-1.2zM442.54 264.15h1.2v0.9h-1.2zM444.04 264.15h1.2v0.9h-1.2zM447.64 264.15h1.2v0.9h-1.2zM449.54 264.15h1.2v0.9h-1.2zM451.04 264.15h1.2v0.9h-1.2zM452.54 264.15h1.2v0.9h-1.2zM454.04 264.15h1.2v0.9h-1.2z" fill="rgba(190,240,215,0.50)"/><path d="M443.89 267.75h1.1v0.9h-1.1zM444.89 267.75h1.1v0.9h-1.1zM447.89 267.75h1.1v0.9h-1.1zM448.89 267.75h1.1v0.9h-1.1zM451.89 267.75h1.1v0.9h-1.1zM452.89 267.75h1.1v0.9h-1.1z" fill="rgba(190,240,215,0.50)"/><path d="M445.89 266.55h1.1v0.9h-1.1zM446.89 266.55h1.1v0.9h-1.1zM449.89 266.55h1.1v0.9h-1.1zM450.89 266.55h1.1v0.9h-1.1zM453.89 266.55h1.1v0.9h-1.1z" fill="rgba(190,240,215,0.50)"/><path d="M440.99 269.70h1.1v1h-1.1zM442.69 269.70h1.1v1h-1.1z" fill="rgba(190,240,215,0.50)"/><path d="M456.42 260.10h0.9v3.4h-0.9zM457.92 260.10h0.9v3.4h-0.9zM459.42 260.10h0.9v3.4h-0.9zM464.92 260.10h0.9v3.4h-0.9zM466.42 260.10h0.9v3.4h-0.9zM467.92 260.10h0.9v3.4h-0.9zM469.42 260.10h0.9v3.4h-0.9zM470.92 260.10h0.9v3.4h-0.9z" fill="rgba(190,240,215,0.50)"/><path d="M460.92 258.70h0.9v4.8h-0.9zM462.42 258.70h0.9v4.8h-0.9z" fill="rgba(190,240,215,0.50)"/><path d="M456.97 264.15h1.2v0.9h-1.2zM458.47 264.15h1.2v0.9h-1.2zM459.97 264.15h1.2v0.9h-1.2zM463.57 264.15h1.2v0.9h-1.2zM465.47 264.15h1.2v0.9h-1.2zM466.97 264.15h1.2v0.9h-1.2zM468.47 264.15h1.2v0.9h-1.2zM469.97 264.15h1.2v0.9h-1.2z" fill="rgba(190,240,215,0.50)"/><path d="M459.82 267.75h1.1v0.9h-1.1zM460.82 267.75h1.1v0.9h-1.1zM463.82 267.75h1.1v0.9h-1.1zM464.82 267.75h1.1v0.9h-1.1zM467.82 267.75h1.1v0.9h-1.1zM468.82 267.75h1.1v0.9h-1.1z" fill="rgba(190,240,215,0.50)"/><path d="M461.82 266.55h1.1v0.9h-1.1zM462.82 266.55h1.1v0.9h-1.1zM465.82 266.55h1.1v0.9h-1.1zM466.82 266.55h1.1v0.9h-1.1zM469.82 266.55h1.1v0.9h-1.1z" fill="rgba(190,240,215,0.50)"/><path d="M456.92 269.70h1.1v1h-1.1zM458.62 269.70h1.1v1h-1.1z" fill="rgba(190,240,215,0.50)"/><path d="M472.35 260.10h0.9v3.4h-0.9zM473.85 260.10h0.9v3.4h-0.9zM475.35 260.10h0.9v3.4h-0.9zM480.85 260.10h0.9v3.4h-0.9zM482.35 260.10h0.9v3.4h-0.9zM483.85 260.10h0.9v3.4h-0.9zM485.35 260.10h0.9v3.4h-0.9zM486.85 260.10h0.9v3.4h-0.9z" fill="rgba(190,240,215,0.50)"/><path d="M476.85 258.70h0.9v4.8h-0.9zM478.35 258.70h0.9v4.8h-0.9z" fill="rgba(190,240,215,0.50)"/><path d="M472.90 264.15h1.2v0.9h-1.2zM474.40 264.15h1.2v0.9h-1.2zM475.90 264.15h1.2v0.9h-1.2zM479.50 264.15h1.2v0.9h-1.2zM481.40 264.15h1.2v0.9h-1.2zM482.90 264.15h1.2v0.9h-1.2zM484.40 264.15h1.2v0.9h-1.2zM485.90 264.15h1.2v0.9h-1.2z" fill="rgba(190,240,215,0.50)"/><path d="M475.75 267.75h1.1v0.9h-1.1zM476.75 267.75h1.1v0.9h-1.1zM479.75 267.75h1.1v0.9h-1.1zM480.75 267.75h1.1v0.9h-1.1zM483.75 267.75h1.1v0.9h-1.1zM484.75 267.75h1.1v0.9h-1.1z" fill="rgba(190,240,215,0.50)"/><path d="M477.75 266.55h1.1v0.9h-1.1zM478.75 266.55h1.1v0.9h-1.1zM481.75 266.55h1.1v0.9h-1.1zM482.75 266.55h1.1v0.9h-1.1zM485.75 266.55h1.1v0.9h-1.1z" fill="rgba(190,240,215,0.50)"/><path d="M472.85 269.70h1.1v1h-1.1zM474.55 269.70h1.1v1h-1.1z" fill="rgba(190,240,215,0.50)"/><path d="M488.29 260.10h0.9v3.4h-0.9zM489.79 260.10h0.9v3.4h-0.9zM491.29 260.10h0.9v3.4h-0.9zM496.79 260.10h0.9v3.4h-0.9zM498.29 260.10h0.9v3.4h-0.9zM499.79 260.10h0.9v3.4h-0.9zM501.29 260.10h0.9v3.4h-0.9zM502.79 260.10h0.9v3.4h-0.9z" fill="rgba(190,240,215,0.50)"/><path d="M492.79 258.70h0.9v4.8h-0.9zM494.29 258.70h0.9v4.8h-0.9z" fill="rgba(190,240,215,0.50)"/><path d="M488.84 264.15h1.2v0.9h-1.2zM490.34 264.15h1.2v0.9h-1.2zM491.84 264.15h1.2v0.9h-1.2zM495.44 264.15h1.2v0.9h-1.2zM497.34 264.15h1.2v0.9h-1.2zM498.84 264.15h1.2v0.9h-1.2zM500.34 264.15h1.2v0.9h-1.2zM501.84 264.15h1.2v0.9h-1.2z" fill="rgba(190,240,215,0.50)"/><path d="M491.69 267.75h1.1v0.9h-1.1zM492.69 267.75h1.1v0.9h-1.1zM495.69 267.75h1.1v0.9h-1.1zM496.69 267.75h1.1v0.9h-1.1zM499.69 267.75h1.1v0.9h-1.1zM500.69 267.75h1.1v0.9h-1.1z" fill="rgba(190,240,215,0.50)"/><path d="M493.69 266.55h1.1v0.9h-1.1zM494.69 266.55h1.1v0.9h-1.1zM497.69 266.55h1.1v0.9h-1.1zM498.69 266.55h1.1v0.9h-1.1zM501.69 266.55h1.1v0.9h-1.1z" fill="rgba(190,240,215,0.50)"/><path d="M488.79 269.70h1.1v1h-1.1zM490.49 269.70h1.1v1h-1.1z" fill="rgba(190,240,215,0.50)"/><path d="M504.22 260.10h0.9v3.4h-0.9zM505.72 260.10h0.9v3.4h-0.9zM507.22 260.10h0.9v3.4h-0.9zM512.72 260.10h0.9v3.4h-0.9zM514.22 260.10h0.9v3.4h-0.9zM515.72 260.10h0.9v3.4h-0.9zM517.22 260.10h0.9v3.4h-0.9zM518.72 260.10h0.9v3.4h-0.9z" fill="rgba(190,240,215,0.50)"/><path d="M508.72 258.70h0.9v4.8h-0.9zM510.22 258.70h0.9v4.8h-0.9z" fill="rgba(190,240,215,0.50)"/><path d="M504.77 264.15h1.2v0.9h-1.2zM506.27 264.15h1.2v0.9h-1.2zM507.77 264.15h1.2v0.9h-1.2zM511.37 264.15h1.2v0.9h-1.2zM513.27 264.15h1.2v0.9h-1.2zM514.77 264.15h1.2v0.9h-1.2zM516.27 264.15h1.2v0.9h-1.2zM517.77 264.15h1.2v0.9h-1.2z" fill="rgba(190,240,215,0.50)"/><path d="M507.62 267.75h1.1v0.9h-1.1zM508.62 267.75h1.1v0.9h-1.1zM511.62 267.75h1.1v0.9h-1.1zM512.62 267.75h1.1v0.9h-1.1zM515.62 267.75h1.1v0.9h-1.1zM516.62 267.75h1.1v0.9h-1.1z" fill="rgba(190,240,215,0.50)"/><path d="M509.62 266.55h1.1v0.9h-1.1zM510.62 266.55h1.1v0.9h-1.1zM513.62 266.55h1.1v0.9h-1.1zM514.62 266.55h1.1v0.9h-1.1zM517.62 266.55h1.1v0.9h-1.1z" fill="rgba(190,240,215,0.50)"/><path d="M504.72 269.70h1.1v1h-1.1zM506.42 269.70h1.1v1h-1.1z" fill="rgba(190,240,215,0.50)"/><path d="M520.16 260.10h0.9v3.4h-0.9zM521.66 260.10h0.9v3.4h-0.9zM523.16 260.10h0.9v3.4h-0.9zM528.66 260.10h0.9v3.4h-0.9zM530.16 260.10h0.9v3.4h-0.9zM531.66 260.10h0.9v3.4h-0.9zM533.16 260.10h0.9v3.4h-0.9zM534.66 260.10h0.9v3.4h-0.9z" fill="rgba(190,240,215,0.50)"/><path d="M524.66 258.70h0.9v4.8h-0.9zM526.16 258.70h0.9v4.8h-0.9z" fill="rgba(190,240,215,0.50)"/><path d="M520.71 264.15h1.2v0.9h-1.2zM522.21 264.15h1.2v0.9h-1.2zM523.71 264.15h1.2v0.9h-1.2zM527.31 264.15h1.2v0.9h-1.2zM529.21 264.15h1.2v0.9h-1.2zM530.71 264.15h1.2v0.9h-1.2zM532.21 264.15h1.2v0.9h-1.2zM533.71 264.15h1.2v0.9h-1.2z" fill="rgba(190,240,215,0.50)"/><path d="M523.56 267.75h1.1v0.9h-1.1zM524.56 267.75h1.1v0.9h-1.1zM527.56 267.75h1.1v0.9h-1.1zM528.56 267.75h1.1v0.9h-1.1zM531.56 267.75h1.1v0.9h-1.1zM532.56 267.75h1.1v0.9h-1.1z" fill="rgba(190,240,215,0.50)"/><path d="M525.56 266.55h1.1v0.9h-1.1zM526.56 266.55h1.1v0.9h-1.1zM529.56 266.55h1.1v0.9h-1.1zM530.56 266.55h1.1v0.9h-1.1zM533.56 266.55h1.1v0.9h-1.1z" fill="rgba(190,240,215,0.50)"/><path d="M520.66 269.70h1.1v1h-1.1zM522.36 269.70h1.1v1h-1.1z" fill="rgba(190,240,215,0.50)"/><path d="M536.09 260.10h0.9v3.4h-0.9zM537.59 260.10h0.9v3.4h-0.9zM539.09 260.10h0.9v3.4h-0.9zM544.59 260.10h0.9v3.4h-0.9zM546.09 260.10h0.9v3.4h-0.9zM547.59 260.10h0.9v3.4h-0.9zM549.09 260.10h0.9v3.4h-0.9zM550.59 260.10h0.9v3.4h-0.9z" fill="rgba(190,240,215,0.50)"/><path d="M540.59 258.70h0.9v4.8h-0.9zM542.09 258.70h0.9v4.8h-0.9z" fill="rgba(190,240,215,0.50)"/><path d="M536.64 264.15h1.2v0.9h-1.2zM538.14 264.15h1.2v0.9h-1.2zM539.64 264.15h1.2v0.9h-1.2zM543.24 264.15h1.2v0.9h-1.2zM545.14 264.15h1.2v0.9h-1.2zM546.64 264.15h1.2v0.9h-1.2zM548.14 264.15h1.2v0.9h-1.2zM549.64 264.15h1.2v0.9h-1.2z" fill="rgba(190,240,215,0.50)"/><path d="M539.49 267.75h1.1v0.9h-1.1zM540.49 267.75h1.1v0.9h-1.1zM543.49 267.75h1.1v0.9h-1.1zM544.49 267.75h1.1v0.9h-1.1zM547.49 267.75h1.1v0.9h-1.1zM548.49 267.75h1.1v0.9h-1.1z" fill="rgba(190,240,215,0.50)"/><path d="M541.49 266.55h1.1v0.9h-1.1zM542.49 266.55h1.1v0.9h-1.1zM545.49 266.55h1.1v0.9h-1.1zM546.49 266.55h1.1v0.9h-1.1zM549.49 266.55h1.1v0.9h-1.1z" fill="rgba(190,240,215,0.50)"/><path d="M536.59 269.70h1.1v1h-1.1zM538.29 269.70h1.1v1h-1.1z" fill="rgba(190,240,215,0.50)"/><path d="M552.02 260.10h0.9v3.4h-0.9zM553.52 260.10h0.9v3.4h-0.9zM555.02 260.10h0.9v3.4h-0.9zM560.52 260.10h0.9v3.4h-0.9zM562.02 260.10h0.9v3.4h-0.9zM563.52 260.10h0.9v3.4h-0.9zM565.02 260.10h0.9v3.4h-0.9z" fill="rgba(190,240,215,0.50)"/><path d="M556.52 258.70h0.9v4.8h-0.9zM558.02 258.70h0.9v4.8h-0.9z" fill="rgba(190,240,215,0.50)"/><path d="M552.57 264.15h1.2v0.9h-1.2zM554.07 264.15h1.2v0.9h-1.2zM555.57 264.15h1.2v0.9h-1.2zM559.17 264.15h1.2v0.9h-1.2zM561.07 264.15h1.2v0.9h-1.2zM562.57 264.15h1.2v0.9h-1.2zM564.07 264.15h1.2v0.9h-1.2zM565.57 264.15h1.2v0.9h-1.2z" fill="rgba(190,240,215,0.50)"/><path d="M555.42 267.75h1.1v0.9h-1.1zM556.42 267.75h1.1v0.9h-1.1zM559.42 267.75h1.1v0.9h-1.1zM560.42 267.75h1.1v0.9h-1.1zM563.42 267.75h1.1v0.9h-1.1zM564.42 267.75h1.1v0.9h-1.1z" fill="rgba(190,240,215,0.50)"/><path d="M557.42 266.55h1.1v0.9h-1.1zM558.42 266.55h1.1v0.9h-1.1zM561.42 266.55h1.1v0.9h-1.1zM562.42 266.55h1.1v0.9h-1.1zM565.42 266.55h1.1v0.9h-1.1z" fill="rgba(190,240,215,0.50)"/><path d="M552.52 269.70h1.1v1h-1.1zM554.22 269.70h1.1v1h-1.1z" fill="rgba(190,240,215,0.50)"/><path d="M568.55 254.30h0.9v3.8h-0.9zM570.15 254.30h0.9v3.8h-0.9zM571.75 254.30h0.9v3.8h-0.9zM573.35 254.30h0.9v3.8h-0.9zM574.95 254.30h0.9v3.8h-0.9zM576.55 254.30h0.9v3.8h-0.9zM578.15 254.30h0.9v3.8h-0.9zM579.75 254.30h0.9v3.8h-0.9z" fill="rgba(190,240,215,0.50)"/><rect x="569.00" y="258.05" width="13.00" height="0.9" fill="rgba(190,240,215,0.50)"/><path d="M569.20 261.35h1.6v0.9h-1.6zM571.20 261.35h1.6v0.9h-1.6zM575.20 261.35h1.6v0.9h-1.6zM578.20 261.35h1.6v0.9h-1.6zM580.20 261.35h1.6v0.9h-1.6z" fill="rgba(190,240,215,0.50)"/><path d="M569.85 263.35h1.3v0.9h-1.3zM573.35 263.35h1.3v0.9h-1.3zM579.85 263.35h1.3v0.9h-1.3z" fill="rgba(190,240,215,0.50)"/><path d="M584.55 254.30h0.9v3.8h-0.9zM586.15 254.30h0.9v3.8h-0.9zM587.75 254.30h0.9v3.8h-0.9zM589.35 254.30h0.9v3.8h-0.9zM590.95 254.30h0.9v3.8h-0.9zM592.55 254.30h0.9v3.8h-0.9zM594.15 254.30h0.9v3.8h-0.9zM595.75 254.30h0.9v3.8h-0.9z" fill="rgba(190,240,215,0.50)"/><rect x="585.00" y="258.05" width="13.00" height="0.9" fill="rgba(190,240,215,0.50)"/><path d="M585.20 261.35h1.6v0.9h-1.6zM587.20 261.35h1.6v0.9h-1.6zM591.20 261.35h1.6v0.9h-1.6zM594.20 261.35h1.6v0.9h-1.6zM596.20 261.35h1.6v0.9h-1.6z" fill="rgba(190,240,215,0.50)"/><path d="M585.85 263.35h1.3v0.9h-1.3zM589.35 263.35h1.3v0.9h-1.3zM595.85 263.35h1.3v0.9h-1.3z" fill="rgba(190,240,215,0.50)"/><rect x="600.3" y="252" width="15.500" height="4.200" fill="rgba(200,245,225,0.36)"/><rect x="616.3" y="253" width="14.800" height="4.200" fill="rgba(200,245,225,0.36)"/><rect x="600.30" y="257.00" width="15.50" height="1.2" fill="rgba(200,245,225,0.58)"/><rect x="600.30" y="260.10" width="15.50" height="1.8" fill="rgba(200,245,225,0.58)"/><rect x="616.30" y="258.10" width="14.80" height="1.2" fill="rgba(200,245,225,0.58)"/><rect x="616.30" y="261.20" width="14.80" height="1.8" fill="rgba(200,245,225,0.58)"/><path d="M632.05 260.10h0.9v3.4h-0.9zM633.55 260.10h0.9v3.4h-0.9zM635.05 260.10h0.9v3.4h-0.9zM640.55 260.10h0.9v3.4h-0.9zM642.05 260.10h0.9v3.4h-0.9zM643.55 260.10h0.9v3.4h-0.9zM645.05 260.10h0.9v3.4h-0.9zM646.55 260.10h0.9v3.4h-0.9z" fill="rgba(190,240,215,0.50)"/><path d="M636.55 258.70h0.9v4.8h-0.9zM638.05 258.70h0.9v4.8h-0.9z" fill="rgba(190,240,215,0.50)"/><path d="M632.60 264.15h1.2v0.9h-1.2zM634.10 264.15h1.2v0.9h-1.2zM635.60 264.15h1.2v0.9h-1.2zM639.20 264.15h1.2v0.9h-1.2zM641.10 264.15h1.2v0.9h-1.2zM642.60 264.15h1.2v0.9h-1.2zM644.10 264.15h1.2v0.9h-1.2zM645.60 264.15h1.2v0.9h-1.2z" fill="rgba(190,240,215,0.50)"/><path d="M635.45 267.75h1.1v0.9h-1.1zM636.45 267.75h1.1v0.9h-1.1zM639.45 267.75h1.1v0.9h-1.1zM640.45 267.75h1.1v0.9h-1.1zM643.45 267.75h1.1v0.9h-1.1zM644.45 267.75h1.1v0.9h-1.1z" fill="rgba(190,240,215,0.50)"/><path d="M637.45 266.55h1.1v0.9h-1.1zM638.45 266.55h1.1v0.9h-1.1zM641.45 266.55h1.1v0.9h-1.1zM642.45 266.55h1.1v0.9h-1.1zM645.45 266.55h1.1v0.9h-1.1z" fill="rgba(190,240,215,0.50)"/><path d="M632.55 269.70h1.1v1h-1.1zM634.25 269.70h1.1v1h-1.1z" fill="rgba(190,240,215,0.50)"/><path d="M647.98 260.10h0.9v3.4h-0.9zM649.48 260.10h0.9v3.4h-0.9zM650.98 260.10h0.9v3.4h-0.9zM656.48 260.10h0.9v3.4h-0.9zM657.98 260.10h0.9v3.4h-0.9zM659.48 260.10h0.9v3.4h-0.9zM660.98 260.10h0.9v3.4h-0.9zM662.48 260.10h0.9v3.4h-0.9z" fill="rgba(190,240,215,0.50)"/><path d="M652.48 258.70h0.9v4.8h-0.9zM653.98 258.70h0.9v4.8h-0.9z" fill="rgba(190,240,215,0.50)"/><path d="M648.53 264.15h1.2v0.9h-1.2zM650.03 264.15h1.2v0.9h-1.2zM651.53 264.15h1.2v0.9h-1.2zM655.13 264.15h1.2v0.9h-1.2zM657.03 264.15h1.2v0.9h-1.2zM658.53 264.15h1.2v0.9h-1.2zM660.03 264.15h1.2v0.9h-1.2zM661.53 264.15h1.2v0.9h-1.2z" fill="rgba(190,240,215,0.50)"/><path d="M651.38 267.75h1.1v0.9h-1.1zM652.38 267.75h1.1v0.9h-1.1zM655.38 267.75h1.1v0.9h-1.1zM656.38 267.75h1.1v0.9h-1.1zM659.38 267.75h1.1v0.9h-1.1zM660.38 267.75h1.1v0.9h-1.1z" fill="rgba(190,240,215,0.50)"/><path d="M653.38 266.55h1.1v0.9h-1.1zM654.38 266.55h1.1v0.9h-1.1zM657.38 266.55h1.1v0.9h-1.1zM658.38 266.55h1.1v0.9h-1.1zM661.38 266.55h1.1v0.9h-1.1z" fill="rgba(190,240,215,0.50)"/><path d="M648.48 269.70h1.1v1h-1.1zM650.18 269.70h1.1v1h-1.1z" fill="rgba(190,240,215,0.50)"/><path d="M663.92 260.10h0.9v3.4h-0.9zM665.42 260.10h0.9v3.4h-0.9zM666.92 260.10h0.9v3.4h-0.9zM672.42 260.10h0.9v3.4h-0.9zM673.92 260.10h0.9v3.4h-0.9zM675.42 260.10h0.9v3.4h-0.9zM676.92 260.10h0.9v3.4h-0.9zM678.42 260.10h0.9v3.4h-0.9z" fill="rgba(190,240,215,0.50)"/><path d="M668.42 258.70h0.9v4.8h-0.9zM669.92 258.70h0.9v4.8h-0.9z" fill="rgba(190,240,215,0.50)"/><path d="M664.47 264.15h1.2v0.9h-1.2zM665.97 264.15h1.2v0.9h-1.2zM667.47 264.15h1.2v0.9h-1.2zM671.07 264.15h1.2v0.9h-1.2zM672.97 264.15h1.2v0.9h-1.2zM674.47 264.15h1.2v0.9h-1.2zM675.97 264.15h1.2v0.9h-1.2zM677.47 264.15h1.2v0.9h-1.2z" fill="rgba(190,240,215,0.50)"/><path d="M667.32 267.75h1.1v0.9h-1.1zM668.32 267.75h1.1v0.9h-1.1zM671.32 267.75h1.1v0.9h-1.1zM672.32 267.75h1.1v0.9h-1.1zM675.32 267.75h1.1v0.9h-1.1zM676.32 267.75h1.1v0.9h-1.1z" fill="rgba(190,240,215,0.50)"/><path d="M669.32 266.55h1.1v0.9h-1.1zM670.32 266.55h1.1v0.9h-1.1zM673.32 266.55h1.1v0.9h-1.1zM674.32 266.55h1.1v0.9h-1.1zM677.32 266.55h1.1v0.9h-1.1z" fill="rgba(190,240,215,0.50)"/><path d="M664.42 269.70h1.1v1h-1.1zM666.12 269.70h1.1v1h-1.1z" fill="rgba(190,240,215,0.50)"/><path d="M679.85 260.10h0.9v3.4h-0.9zM681.35 260.10h0.9v3.4h-0.9zM682.85 260.10h0.9v3.4h-0.9zM688.35 260.10h0.9v3.4h-0.9zM689.85 260.10h0.9v3.4h-0.9zM691.35 260.10h0.9v3.4h-0.9zM692.85 260.10h0.9v3.4h-0.9zM694.35 260.10h0.9v3.4h-0.9z" fill="rgba(190,240,215,0.50)"/><path d="M684.35 258.70h0.9v4.8h-0.9zM685.85 258.70h0.9v4.8h-0.9z" fill="rgba(190,240,215,0.50)"/><path d="M680.40 264.15h1.2v0.9h-1.2zM681.90 264.15h1.2v0.9h-1.2zM683.40 264.15h1.2v0.9h-1.2zM687.00 264.15h1.2v0.9h-1.2zM688.90 264.15h1.2v0.9h-1.2zM690.40 264.15h1.2v0.9h-1.2zM691.90 264.15h1.2v0.9h-1.2zM693.40 264.15h1.2v0.9h-1.2z" fill="rgba(190,240,215,0.50)"/><path d="M683.25 267.75h1.1v0.9h-1.1zM684.25 267.75h1.1v0.9h-1.1zM687.25 267.75h1.1v0.9h-1.1zM688.25 267.75h1.1v0.9h-1.1zM691.25 267.75h1.1v0.9h-1.1zM692.25 267.75h1.1v0.9h-1.1z" fill="rgba(190,240,215,0.50)"/><path d="M685.25 266.55h1.1v0.9h-1.1zM686.25 266.55h1.1v0.9h-1.1zM689.25 266.55h1.1v0.9h-1.1zM690.25 266.55h1.1v0.9h-1.1zM693.25 266.55h1.1v0.9h-1.1z" fill="rgba(190,240,215,0.50)"/><path d="M680.35 269.70h1.1v1h-1.1zM682.05 269.70h1.1v1h-1.1z" fill="rgba(190,240,215,0.50)"/><path d="M695.79 260.10h0.9v3.4h-0.9zM697.29 260.10h0.9v3.4h-0.9zM698.79 260.10h0.9v3.4h-0.9zM704.29 260.10h0.9v3.4h-0.9zM705.79 260.10h0.9v3.4h-0.9zM707.29 260.10h0.9v3.4h-0.9zM708.79 260.10h0.9v3.4h-0.9zM710.29 260.10h0.9v3.4h-0.9z" fill="rgba(190,240,215,0.50)"/><path d="M700.29 258.70h0.9v4.8h-0.9zM701.79 258.70h0.9v4.8h-0.9z" fill="rgba(190,240,215,0.50)"/><path d="M696.34 264.15h1.2v0.9h-1.2zM697.84 264.15h1.2v0.9h-1.2zM699.34 264.15h1.2v0.9h-1.2zM702.94 264.15h1.2v0.9h-1.2zM704.84 264.15h1.2v0.9h-1.2zM706.34 264.15h1.2v0.9h-1.2zM707.84 264.15h1.2v0.9h-1.2zM709.34 264.15h1.2v0.9h-1.2z" fill="rgba(190,240,215,0.50)"/><path d="M699.19 267.75h1.1v0.9h-1.1zM700.19 267.75h1.1v0.9h-1.1zM703.19 267.75h1.1v0.9h-1.1zM704.19 267.75h1.1v0.9h-1.1zM707.19 267.75h1.1v0.9h-1.1zM708.19 267.75h1.1v0.9h-1.1z" fill="rgba(190,240,215,0.50)"/><path d="M701.19 266.55h1.1v0.9h-1.1zM702.19 266.55h1.1v0.9h-1.1zM705.19 266.55h1.1v0.9h-1.1zM706.19 266.55h1.1v0.9h-1.1zM709.19 266.55h1.1v0.9h-1.1z" fill="rgba(190,240,215,0.50)"/><path d="M696.29 269.70h1.1v1h-1.1zM697.99 269.70h1.1v1h-1.1z" fill="rgba(190,240,215,0.50)"/><path d="M711.72 260.10h0.9v3.4h-0.9zM713.22 260.10h0.9v3.4h-0.9zM714.72 260.10h0.9v3.4h-0.9zM720.22 260.10h0.9v3.4h-0.9zM721.72 260.10h0.9v3.4h-0.9zM723.22 260.10h0.9v3.4h-0.9zM724.72 260.10h0.9v3.4h-0.9zM726.22 260.10h0.9v3.4h-0.9z" fill="rgba(190,240,215,0.50)"/><path d="M716.22 258.70h0.9v4.8h-0.9zM717.72 258.70h0.9v4.8h-0.9z" fill="rgba(190,240,215,0.50)"/><path d="M712.27 264.15h1.2v0.9h-1.2zM713.77 264.15h1.2v0.9h-1.2zM715.27 264.15h1.2v0.9h-1.2zM718.87 264.15h1.2v0.9h-1.2zM720.77 264.15h1.2v0.9h-1.2zM722.27 264.15h1.2v0.9h-1.2zM723.77 264.15h1.2v0.9h-1.2zM725.27 264.15h1.2v0.9h-1.2z" fill="rgba(190,240,215,0.50)"/><path d="M715.12 267.75h1.1v0.9h-1.1zM716.12 267.75h1.1v0.9h-1.1zM719.12 267.75h1.1v0.9h-1.1zM720.12 267.75h1.1v0.9h-1.1zM723.12 267.75h1.1v0.9h-1.1zM724.12 267.75h1.1v0.9h-1.1z" fill="rgba(190,240,215,0.50)"/><path d="M717.12 266.55h1.1v0.9h-1.1zM718.12 266.55h1.1v0.9h-1.1zM721.12 266.55h1.1v0.9h-1.1zM722.12 266.55h1.1v0.9h-1.1zM725.12 266.55h1.1v0.9h-1.1z" fill="rgba(190,240,215,0.50)"/><path d="M712.22 269.70h1.1v1h-1.1zM713.92 269.70h1.1v1h-1.1z" fill="rgba(190,240,215,0.50)"/><path d="M727.65 260.10h0.9v3.4h-0.9zM729.15 260.10h0.9v3.4h-0.9zM730.65 260.10h0.9v3.4h-0.9zM736.15 260.10h0.9v3.4h-0.9zM737.65 260.10h0.9v3.4h-0.9zM739.15 260.10h0.9v3.4h-0.9zM740.65 260.10h0.9v3.4h-0.9zM742.15 260.10h0.9v3.4h-0.9z" fill="rgba(190,240,215,0.50)"/><path d="M732.15 258.70h0.9v4.8h-0.9zM733.65 258.70h0.9v4.8h-0.9z" fill="rgba(190,240,215,0.50)"/><path d="M728.20 264.15h1.2v0.9h-1.2zM729.70 264.15h1.2v0.9h-1.2zM731.20 264.15h1.2v0.9h-1.2zM734.80 264.15h1.2v0.9h-1.2zM736.70 264.15h1.2v0.9h-1.2zM738.20 264.15h1.2v0.9h-1.2zM739.70 264.15h1.2v0.9h-1.2zM741.20 264.15h1.2v0.9h-1.2z" fill="rgba(190,240,215,0.50)"/><path d="M731.05 267.75h1.1v0.9h-1.1zM732.05 267.75h1.1v0.9h-1.1zM735.05 267.75h1.1v0.9h-1.1zM736.05 267.75h1.1v0.9h-1.1zM739.05 267.75h1.1v0.9h-1.1zM740.05 267.75h1.1v0.9h-1.1z" fill="rgba(190,240,215,0.50)"/><path d="M733.05 266.55h1.1v0.9h-1.1zM734.05 266.55h1.1v0.9h-1.1zM737.05 266.55h1.1v0.9h-1.1zM738.05 266.55h1.1v0.9h-1.1zM741.05 266.55h1.1v0.9h-1.1z" fill="rgba(190,240,215,0.50)"/><path d="M728.15 269.70h1.1v1h-1.1zM729.85 269.70h1.1v1h-1.1z" fill="rgba(190,240,215,0.50)"/><path d="M743.59 260.10h0.9v3.4h-0.9zM745.09 260.10h0.9v3.4h-0.9zM746.59 260.10h0.9v3.4h-0.9zM752.09 260.10h0.9v3.4h-0.9zM753.59 260.10h0.9v3.4h-0.9zM755.09 260.10h0.9v3.4h-0.9zM756.59 260.10h0.9v3.4h-0.9zM758.09 260.10h0.9v3.4h-0.9z" fill="rgba(190,240,215,0.50)"/><path d="M748.09 258.70h0.9v4.8h-0.9zM749.59 258.70h0.9v4.8h-0.9z" fill="rgba(190,240,215,0.50)"/><path d="M744.14 264.15h1.2v0.9h-1.2zM745.64 264.15h1.2v0.9h-1.2zM747.14 264.15h1.2v0.9h-1.2zM750.74 264.15h1.2v0.9h-1.2zM752.64 264.15h1.2v0.9h-1.2zM754.14 264.15h1.2v0.9h-1.2zM755.64 264.15h1.2v0.9h-1.2zM757.14 264.15h1.2v0.9h-1.2z" fill="rgba(190,240,215,0.50)"/><path d="M746.99 267.75h1.1v0.9h-1.1zM747.99 267.75h1.1v0.9h-1.1zM750.99 267.75h1.1v0.9h-1.1zM751.99 267.75h1.1v0.9h-1.1zM754.99 267.75h1.1v0.9h-1.1zM755.99 267.75h1.1v0.9h-1.1z" fill="rgba(190,240,215,0.50)"/><path d="M748.99 266.55h1.1v0.9h-1.1zM749.99 266.55h1.1v0.9h-1.1zM752.99 266.55h1.1v0.9h-1.1zM753.99 266.55h1.1v0.9h-1.1zM756.99 266.55h1.1v0.9h-1.1z" fill="rgba(190,240,215,0.50)"/><path d="M744.09 269.70h1.1v1h-1.1zM745.79 269.70h1.1v1h-1.1z" fill="rgba(190,240,215,0.50)"/><path d="M759.52 260.10h0.9v3.4h-0.9zM761.02 260.10h0.9v3.4h-0.9zM762.52 260.10h0.9v3.4h-0.9zM768.02 260.10h0.9v3.4h-0.9zM769.52 260.10h0.9v3.4h-0.9zM771.02 260.10h0.9v3.4h-0.9zM772.52 260.10h0.9v3.4h-0.9zM774.02 260.10h0.9v3.4h-0.9z" fill="rgba(190,240,215,0.50)"/><path d="M764.02 258.70h0.9v4.8h-0.9zM765.52 258.70h0.9v4.8h-0.9z" fill="rgba(190,240,215,0.50)"/><path d="M760.07 264.15h1.2v0.9h-1.2zM761.57 264.15h1.2v0.9h-1.2zM763.07 264.15h1.2v0.9h-1.2zM766.67 264.15h1.2v0.9h-1.2zM768.57 264.15h1.2v0.9h-1.2zM770.07 264.15h1.2v0.9h-1.2zM771.57 264.15h1.2v0.9h-1.2zM773.07 264.15h1.2v0.9h-1.2z" fill="rgba(190,240,215,0.50)"/><path d="M762.92 267.75h1.1v0.9h-1.1zM763.92 267.75h1.1v0.9h-1.1zM766.92 267.75h1.1v0.9h-1.1zM767.92 267.75h1.1v0.9h-1.1zM770.92 267.75h1.1v0.9h-1.1zM771.92 267.75h1.1v0.9h-1.1z" fill="rgba(190,240,215,0.50)"/><path d="M764.92 266.55h1.1v0.9h-1.1zM765.92 266.55h1.1v0.9h-1.1zM768.92 266.55h1.1v0.9h-1.1zM769.92 266.55h1.1v0.9h-1.1zM772.92 266.55h1.1v0.9h-1.1z" fill="rgba(190,240,215,0.50)"/><path d="M760.02 269.70h1.1v1h-1.1zM761.72 269.70h1.1v1h-1.1z" fill="rgba(190,240,215,0.50)"/><path d="M775.46 260.10h0.9v3.4h-0.9zM776.96 260.10h0.9v3.4h-0.9zM778.46 260.10h0.9v3.4h-0.9zM783.96 260.10h0.9v3.4h-0.9zM785.46 260.10h0.9v3.4h-0.9zM786.96 260.10h0.9v3.4h-0.9zM788.46 260.10h0.9v3.4h-0.9zM789.96 260.10h0.9v3.4h-0.9z" fill="rgba(190,240,215,0.50)"/><path d="M779.96 258.70h0.9v4.8h-0.9zM781.46 258.70h0.9v4.8h-0.9z" fill="rgba(190,240,215,0.50)"/><path d="M776.01 264.15h1.2v0.9h-1.2zM777.51 264.15h1.2v0.9h-1.2zM779.01 264.15h1.2v0.9h-1.2zM782.61 264.15h1.2v0.9h-1.2zM784.51 264.15h1.2v0.9h-1.2zM786.01 264.15h1.2v0.9h-1.2zM787.51 264.15h1.2v0.9h-1.2zM789.01 264.15h1.2v0.9h-1.2z" fill="rgba(190,240,215,0.50)"/><path d="M778.86 267.75h1.1v0.9h-1.1zM779.86 267.75h1.1v0.9h-1.1zM782.86 267.75h1.1v0.9h-1.1zM783.86 267.75h1.1v0.9h-1.1zM786.86 267.75h1.1v0.9h-1.1zM787.86 267.75h1.1v0.9h-1.1z" fill="rgba(190,240,215,0.50)"/><path d="M780.86 266.55h1.1v0.9h-1.1zM781.86 266.55h1.1v0.9h-1.1zM784.86 266.55h1.1v0.9h-1.1zM785.86 266.55h1.1v0.9h-1.1zM788.86 266.55h1.1v0.9h-1.1z" fill="rgba(190,240,215,0.50)"/><path d="M775.96 269.70h1.1v1h-1.1zM777.66 269.70h1.1v1h-1.1z" fill="rgba(190,240,215,0.50)"/><path d="M791.39 260.10h0.9v3.4h-0.9zM792.89 260.10h0.9v3.4h-0.9zM794.39 260.10h0.9v3.4h-0.9z" fill="rgba(190,240,215,0.50)"/><path d="M795.89 258.70h0.9v4.8h-0.9zM797.39 258.70h0.9v4.8h-0.9z" fill="rgba(190,240,215,0.50)"/><path d="M791.94 264.15h1.2v0.9h-1.2zM793.44 264.15h1.2v0.9h-1.2zM794.94 264.15h1.2v0.9h-1.2zM798.54 264.15h1.2v0.9h-1.2z" fill="rgba(190,240,215,0.50)"/><path d="M794.79 267.75h1.1v0.9h-1.1zM795.79 267.75h1.1v0.9h-1.1zM798.79 267.75h1.1v0.9h-1.1z" fill="rgba(190,240,215,0.50)"/><path d="M796.79 266.55h1.1v0.9h-1.1zM797.79 266.55h1.1v0.9h-1.1z" fill="rgba(190,240,215,0.50)"/><path d="M791.89 269.70h1.1v1h-1.1zM793.59 269.70h1.1v1h-1.1z" fill="rgba(190,240,215,0.50)"/><rect x="345.90" y="283.90" width="15.20" height="1.8" fill="rgba(190,245,200,0.74)"/><rect x="345.90" y="293.40" width="15.20" height="1.8" fill="rgba(190,245,200,0.74)"/><rect x="345.90" y="297.80" width="15.20" height="1.8" fill="rgba(190,245,200,0.74)"/><rect x="345.90" y="303.20" width="15.20" height="1.8" fill="rgba(190,245,200,0.74)"/><rect x="361.10" y="286.50" width="16.10" height="1.8" fill="rgba(190,245,200,0.74)"/><rect x="361.10" y="295.10" width="16.10" height="1.8" fill="rgba(190,245,200,0.74)"/><rect x="361.10" y="299.90" width="16.10" height="1.8" fill="rgba(190,245,200,0.74)"/><rect x="361.10" y="305.80" width="16.10" height="1.8" fill="rgba(190,245,200,0.74)"/><rect x="345.20" y="285.50" width="1" height="1.100" fill="rgba(190,245,200,0.74)"/><rect x="345.04" y="287.30" width="1" height="1.100" fill="rgba(190,245,200,0.74)"/><rect x="344.88" y="289.10" width="1" height="1.100" fill="rgba(190,245,200,0.74)"/><rect x="344.71" y="290.90" width="1" height="1.100" fill="rgba(190,245,200,0.74)"/><rect x="344.55" y="292.70" width="1" height="1.100" fill="rgba(190,245,200,0.74)"/><rect x="344.39" y="294.50" width="1" height="1.100" fill="rgba(190,245,200,0.74)"/><rect x="344.23" y="296.30" width="1" height="1.100" fill="rgba(190,245,200,0.74)"/><rect x="344.07" y="298.10" width="1" height="1.100" fill="rgba(190,245,200,0.74)"/><rect x="343.90" y="299.90" width="1" height="1.100" fill="rgba(190,245,200,0.74)"/><rect x="343.74" y="301.70" width="1" height="1.100" fill="rgba(190,245,200,0.74)"/><rect x="343.58" y="303.50" width="1" height="1.100" fill="rgba(190,245,200,0.74)"/><rect x="343.42" y="305.30" width="1" height="1.100" fill="rgba(190,245,200,0.74)"/><rect x="600.60" y="283.90" width="15.20" height="1.8" fill="rgba(190,245,200,0.74)"/><rect x="600.60" y="293.40" width="15.20" height="1.8" fill="rgba(190,245,200,0.74)"/><rect x="600.60" y="297.80" width="15.20" height="1.8" fill="rgba(190,245,200,0.74)"/><rect x="600.60" y="303.20" width="15.20" height="1.8" fill="rgba(190,245,200,0.74)"/><rect x="615.80" y="286.50" width="16.10" height="1.8" fill="rgba(190,245,200,0.74)"/><rect x="615.80" y="295.10" width="16.10" height="1.8" fill="rgba(190,245,200,0.74)"/><rect x="615.80" y="299.90" width="16.10" height="1.8" fill="rgba(190,245,200,0.74)"/><rect x="615.80" y="305.80" width="16.10" height="1.8" fill="rgba(190,245,200,0.74)"/><rect x="599.90" y="285.50" width="1" height="1.100" fill="rgba(190,245,200,0.74)"/><rect x="599.74" y="287.30" width="1" height="1.100" fill="rgba(190,245,200,0.74)"/><rect x="599.58" y="289.10" width="1" height="1.100" fill="rgba(190,245,200,0.74)"/><rect x="599.41" y="290.90" width="1" height="1.100" fill="rgba(190,245,200,0.74)"/><rect x="599.25" y="292.70" width="1" height="1.100" fill="rgba(190,245,200,0.74)"/><rect x="599.09" y="294.50" width="1" height="1.100" fill="rgba(190,245,200,0.74)"/><rect x="598.93" y="296.30" width="1" height="1.100" fill="rgba(190,245,200,0.74)"/><rect x="598.77" y="298.10" width="1" height="1.100" fill="rgba(190,245,200,0.74)"/><rect x="598.60" y="299.90" width="1" height="1.100" fill="rgba(190,245,200,0.74)"/><rect x="598.44" y="301.70" width="1" height="1.100" fill="rgba(190,245,200,0.74)"/><rect x="598.28" y="303.50" width="1" height="1.100" fill="rgba(190,245,200,0.74)"/><rect x="598.12" y="305.30" width="1" height="1.100" fill="rgba(190,245,200,0.74)"/><rect x="345.30" y="316.80" width="1" height="1.100" fill="rgba(250,225,190,0.75)"/><rect x="345.16" y="318.50" width="1" height="1.100" fill="rgba(250,225,190,0.75)"/><rect x="345.01" y="320.20" width="1" height="1.100" fill="rgba(250,225,190,0.75)"/><rect x="344.87" y="321.90" width="1" height="1.100" fill="rgba(250,225,190,0.75)"/><rect x="344.72" y="323.60" width="1" height="1.100" fill="rgba(250,225,190,0.75)"/><rect x="344.58" y="325.30" width="1" height="1.100" fill="rgba(250,225,190,0.75)"/><rect x="344.43" y="327.00" width="1" height="1.100" fill="rgba(250,225,190,0.75)"/><rect x="344.29" y="328.70" width="1" height="1.100" fill="rgba(250,225,190,0.75)"/><rect x="344.14" y="330.40" width="1" height="1.100" fill="rgba(250,225,190,0.75)"/><rect x="344.00" y="332.10" width="1" height="1.100" fill="rgba(250,225,190,0.75)"/><rect x="343.86" y="333.80" width="1" height="1.100" fill="rgba(250,225,190,0.75)"/><rect x="343.71" y="335.50" width="1" height="1.100" fill="rgba(250,225,190,0.75)"/><rect x="343.57" y="337.20" width="1" height="1.100" fill="rgba(250,225,190,0.75)"/><rect x="600.20" y="316.80" width="1" height="1.100" fill="rgba(250,225,190,0.75)"/><rect x="600.06" y="318.50" width="1" height="1.100" fill="rgba(250,225,190,0.75)"/><rect x="599.91" y="320.20" width="1" height="1.100" fill="rgba(250,225,190,0.75)"/><rect x="599.77" y="321.90" width="1" height="1.100" fill="rgba(250,225,190,0.75)"/><rect x="599.62" y="323.60" width="1" height="1.100" fill="rgba(250,225,190,0.75)"/><rect x="599.48" y="325.30" width="1" height="1.100" fill="rgba(250,225,190,0.75)"/><rect x="599.33" y="327.00" width="1" height="1.100" fill="rgba(250,225,190,0.75)"/><rect x="599.19" y="328.70" width="1" height="1.100" fill="rgba(250,225,190,0.75)"/><rect x="599.04" y="330.40" width="1" height="1.100" fill="rgba(250,225,190,0.75)"/><rect x="598.90" y="332.10" width="1" height="1.100" fill="rgba(250,225,190,0.75)"/><rect x="598.76" y="333.80" width="1" height="1.100" fill="rgba(250,225,190,0.75)"/><rect x="598.61" y="335.50" width="1" height="1.100" fill="rgba(250,225,190,0.75)"/><rect x="598.47" y="337.20" width="1" height="1.100" fill="rgba(250,225,190,0.75)"/><path d="M186.25 354.15h1.5v1.5h-1.5z" fill="#f4c3a4"/><rect x="187.80" y="358.65" width="9.00" height="1.7" fill="#f4c3a4"/><path d="M198.25 358.75h1.5v1.5h-1.5z" fill="#f4c3a4"/><rect x="200.50" y="358.65" width="10.50" height="1.7" fill="#f4c3a4"/><path d="M217.65 354.15h1.5v1.5h-1.5z" fill="#f4c3a4"/><path d="M217.00 359.00h1.2v1.2h-1.2z" fill="#f4c3a4"/><rect x="220.50" y="358.65" width="4.20" height="1.7" fill="#f4c3a4"/><rect x="224.70" y="357.95" width="1.60" height="1.5" fill="#f4c3a4"/><rect x="226.30" y="356.95" width="5.40" height="1.7" fill="#f4c3a4"/><rect x="232.70" y="358.65" width="6.80" height="1.7" fill="#f4c3a4"/><path d="M249.95 354.15h1.5v1.5h-1.5z" fill="#f4c3a4"/><rect x="251.50" y="358.65" width="9.00" height="1.7" fill="#f4c3a4"/><path d="M261.95 358.75h1.5v1.5h-1.5z" fill="#f4c3a4"/><rect x="264.20" y="358.65" width="10.50" height="1.7" fill="#f4c3a4"/><path d="M282.15 354.15h1.5v1.5h-1.5z" fill="#f4c3a4"/><path d="M281.50 359.00h1.2v1.2h-1.2z" fill="#f4c3a4"/><rect x="285.00" y="358.65" width="4.20" height="1.7" fill="#f4c3a4"/><rect x="289.20" y="357.95" width="1.60" height="1.5" fill="#f4c3a4"/><rect x="290.80" y="356.95" width="5.40" height="1.7" fill="#f4c3a4"/><rect x="297.20" y="358.65" width="6.80" height="1.7" fill="#f4c3a4"/><rect x="296.00" y="358.65" width="9.00" height="1.7" fill="#f4c3a4"/><path d="M316.95 353.90h1.6v1.4h-1.6zM322.95 353.90h1.6v1.4h-1.6z" fill="#f4c3a4"/><rect x="314.00" y="358.70" width="2.40" height="1.6" fill="#f4c3a4"/><rect x="320.00" y="358.70" width="2.40" height="1.6" fill="#f4c3a4"/><path d="M325.75 358.75h1.5v1.5h-1.5z" fill="#f4c3a4"/><path d="M343.95 357.50h1.5v1.4h-1.5z" fill="#f4c3a4"/><path d="M345.55 358.60h1.5v1.4h-1.5z" fill="#f4c3a4"/><rect x="347.50" y="359.35" width="8.50" height="1.7" fill="#f4c3a4"/><path d="M357.50 357.65h1.4v1.3h-1.4z" fill="#f4c3a4"/><path d="M359.00 356.95h1.4v1.3h-1.4z" fill="#f4c3a4"/><rect x="361.70" y="358.65" width="10.80" height="1.7" fill="#f4c3a4"/><path d="M362.80 362.00h1.4v1.4h-1.4z" fill="#f4c3a4"/><rect x="290.00" y="386.70" width="6.70" height="1.4" fill="#f6b6c0"/><rect x="383.150" y="50" width="1.250" height="338" fill="#b3a0ee"/><path d="M380.300 44.600h7.200q1 0 1 1v5.600q0 0.900-0.700 1.500l-3.300 3q-0.600 0.500-1.200 0l-3.300-3q-0.700-0.600-0.700-1.500v-5.600q0-1 1-1z" fill="#9b87f0"/><rect x="795.800" y="83" width="3.200" height="172" rx="1.600" fill="rgba(255,255,255,0.42)"/></g></svg>
<div class="a" style="left:0px;top:388px;width:800px;height:17.5px;background:#1b1b1e;"></div>
<svg style="left:0px;top:388px;" width="800" height="18" viewBox="0 0 800 18"><circle cx="770.3" cy="6.2" r="3" fill="none" stroke="#b8b8be" stroke-width="0.900"/><path d="M772.5 8.4l2 2" stroke="#b8b8be" stroke-width="1.100" stroke-linecap="round"/><path d="M768.8 6.2h3" stroke="#b8b8be" stroke-width="0.800"/><path d="M770.3 4.7v3" stroke="#b8b8be" stroke-width="0.800"/><circle cx="784.3" cy="6.2" r="3" fill="none" stroke="#b8b8be" stroke-width="0.900"/><path d="M786.5 8.4l2 2" stroke="#b8b8be" stroke-width="1.100" stroke-linecap="round"/><path d="M782.8 6.2h3" stroke="#b8b8be" stroke-width="0.800"/></svg>
<div class="a" style="left:0px;top:405.5px;width:800px;height:122px;background:#26262a;"></div>
<div class="a" style="left:388px;top:406.5px;width:25px;height:1.2px;background:#4a4a4f;border-radius:1px"></div>
<svg style="left:9px;top:416px;" width="10" height="10" viewBox="0 0 10 10"><path d="M1.500 1.500l7 7M8.500 1.500l-7 7" stroke="#c8c8ce" stroke-width="1" stroke-linecap="round"/></svg>
<div class="t" style="left:299.8px;top:422.90px;font-size:7.8px;color:#f0f0f2;font-weight:400;-webkit-text-stroke:0.35px #f0f0f2">Instrument</div>
<div class="t" style="left:358.7px;top:423.00px;font-size:7.6px;color:#9f8cf0;font-weight:400;-webkit-text-stroke:0.35px #9f8cf0">Patterns</div>
<div class="t" style="left:411px;top:423.15px;font-size:7.3px;color:#f0f0f2;font-weight:400;-webkit-text-stroke:0.35px #f0f0f2">Piano Roll</div>
<div class="t" style="left:470px;top:422.80px;font-size:8.0px;color:#f0f0f2;font-weight:400;-webkit-text-stroke:0.35px #f0f0f2">Effects</div>
<div class="a" style="left:110px;top:447px;width:124.5px;height:23.5px;background:transparent;border:1px solid #2f2f34;border-radius:2px"></div>
<svg style="left:116px;top:455px;" width="6" height="8" viewBox="0 0 6 8"><path d="M4.500 1L1.500 4l3 3" fill="none" stroke="#8c8c92" stroke-width="1" stroke-linecap="round" stroke-linejoin="round"/></svg>
<svg style="left:222px;top:455px;" width="6" height="8" viewBox="0 0 6 8"><path d="M1.500 1l3 3-3 3" fill="none" stroke="#8c8c92" stroke-width="1" stroke-linecap="round" stroke-linejoin="round"/></svg>
<svg style="left:131px;top:453.5px;" width="10" height="11" viewBox="0 0 10 11"><g transform="translate(5 6.200) scale(0.85)"><path d="M-3.700 -0.800v3.200a3.700 2.100 0 0 0 7.400 0v-3.200z" fill="none" stroke="#f2f2f4" stroke-width="1.500" stroke-linejoin="round" stroke-linecap="round"/><path d="M-2.600 1.900c1.600 0.700 3.600 0.700 5.200 0" fill="none" stroke="#f2f2f4" stroke-width="1.100" stroke-linecap="round"/><path d="M-3.600 -4.600l3.400 3.300M3.800 -5.400l-3.800 4.200" fill="none" stroke="#f2f2f4" stroke-width="1.300" stroke-linecap="round"/></g></svg>
<div class="t" style="left:150px;top:452.75px;font-size:6.5px;color:#fff;font-weight:400;-webkit-text-stroke:0.3px #fff;">Machines</div>
<div class="t" style="left:150px;top:460.55px;font-size:6.5px;color:#f2f2f4;font-weight:400;-webkit-text-stroke:0.2px #f2f2f4">80s Drum Machine</div>
<div class="a" style="left:242.4px;top:447px;width:111.4px;height:23.5px;background:transparent;border:1px solid #2f2f34;border-radius:2px"></div>
<svg style="left:250px;top:454.5px;" width="9" height="9" viewBox="0 0 9 9"><path d="M1.500 0.500v8M4.500 0.500v8M7.500 0.500v8" stroke="#f2f2f4" stroke-width="0.900"/><rect x="0.500" y="4.800" width="2" height="1.800" fill="#f2f2f4"/><rect x="3.500" y="2" width="2" height="1.800" fill="#f2f2f4"/><rect x="6.500" y="5.500" width="2" height="1.800" fill="#f2f2f4"/></svg>
<div class="t" style="left:265px;top:452.85px;font-size:6.3px;color:#fff;font-weight:400;-webkit-text-stroke:0.3px #fff;">Effects (4)</div>
<div class="t" style="left:265px;top:460.60px;font-size:6.4px;color:#f2f2f4;font-weight:400;-webkit-text-stroke:0.2px #f2f2f4">Room + Dynamics Compr...</div>
<svg style="left:0px;top:0px;" width="800" height="480" viewBox="0 0 800 480"><circle cx="428.6" cy="458" r="12" fill="none" stroke="#3b3b40" stroke-width="1.600"/><circle cx="469.6" cy="458" r="12" fill="none" stroke="#3b3b40" stroke-width="1.600"/><circle cx="510" cy="458" r="12" fill="none" stroke="#3b3b40" stroke-width="1.600"/><path d="M426.13 460.47L419.76 466.84" stroke="#9f8cf0" stroke-width="1.500" stroke-linecap="round"/><path d="M469.600 455.500V445.200" stroke="#9f8cf0" stroke-width="1.600" stroke-linecap="round"/><path d="M501.51 466.49A12 12 0 1 1 521.41 454.29" fill="none" stroke="#a08df2" stroke-width="2.800" stroke-linecap="round"/><path d="M513.33 456.92L521.41 454.29" stroke="#a08df2" stroke-width="2" stroke-linecap="round"/></svg>
<div class="t" style="left:328.6px;width:200px;text-align:center;top:472.85px;font-size:5.9px;color:#fff;font-weight:400;-webkit-text-stroke:0.3px #fff;">Reverb</div>
<div class="t" style="left:369.6px;width:200px;text-align:center;top:472.85px;font-size:5.9px;color:#fff;font-weight:400;-webkit-text-stroke:0.3px #fff;">Pan</div>
<div class="t" style="left:410px;width:200px;text-align:center;top:472.85px;font-size:5.9px;color:#fff;font-weight:400;-webkit-text-stroke:0.3px #fff;">Volume</div>
<div class="a" style="left:585px;top:454.5px;width:51px;height:13px;background:transparent;border:1px solid #6c6c72;border-radius:6.500px"></div>
<svg style="left:592.5px;top:456.5px;" width="8" height="9" viewBox="0 0 8 9"><g transform="translate(4 5.200) scale(0.68)"><path d="M-3.700 -0.800v3.200a3.700 2.100 0 0 0 7.400 0v-3.200z" fill="none" stroke="#f2f2f4" stroke-width="1.500" stroke-linejoin="round" stroke-linecap="round"/><path d="M-2.600 1.900c1.600 0.700 3.600 0.700 5.200 0" fill="none" stroke="#f2f2f4" stroke-width="1.100" stroke-linecap="round"/><path d="M-3.600 -4.600l3.400 3.300M3.800 -5.400l-3.800 4.200" fill="none" stroke="#f2f2f4" stroke-width="1.300" stroke-linecap="round"/></g></svg>
<div class="t" style="left:602.5px;top:458.20px;font-size:6px;color:#fff;font-weight:400;-webkit-text-stroke:0.3px #fff;">Generate</div>
<div class="a" style="left:640px;top:454.5px;width:52px;height:13px;background:transparent;border:1px solid #6c6c72;border-radius:6.500px"></div>
<div class="t" style="left:647px;top:458.20px;font-size:6px;color:#fff;font-weight:400;-webkit-text-stroke:0.3px #fff;">Save Preset...</div>
<div class="a" style="left:0px;top:489px;width:800px;height:38.5px;background:#2b0b57;"></div>
<svg style="left:0;top:489px" width="800" height="38.300" viewBox="0 489 800 38.300"><defs><clipPath id="gc"><rect x="0" y="489" width="800" height="38.300"/></clipPath></defs><g clip-path="url(#gc)"><rect x="52.10" y="480.00" width="21.20" height="25.90" rx="2" fill="#3e1383" stroke="#9656ea" stroke-width="1.300"/><rect x="52.10" y="508.90" width="21.20" height="26.10" rx="2" fill="#3e1383" stroke="#9656ea" stroke-width="1.300"/><rect x="76.00" y="480.00" width="21.20" height="25.90" rx="2" fill="#3e1383" stroke="#9656ea" stroke-width="1.300"/><rect x="76.00" y="508.90" width="21.20" height="26.10" rx="2" fill="#3e1383" stroke="#9656ea" stroke-width="1.300"/><rect x="99.90" y="480.00" width="21.20" height="25.90" rx="2" fill="#3e1383" stroke="#9656ea" stroke-width="1.300"/><rect x="99.90" y="508.90" width="21.20" height="26.10" rx="2" fill="#3e1383" stroke="#9656ea" stroke-width="1.300"/><rect x="132.00" y="480.00" width="21.20" height="25.90" rx="2" fill="#3e1383" stroke="#9656ea" stroke-width="1.300"/><rect x="132.00" y="508.90" width="21.20" height="26.10" rx="2" fill="#3e1383" stroke="#9656ea" stroke-width="1.300"/><rect x="155.90" y="480.00" width="21.20" height="25.90" rx="2" fill="#3e1383" stroke="#9656ea" stroke-width="1.300"/><rect x="155.90" y="508.90" width="21.20" height="26.10" rx="2" fill="#3e1383" stroke="#9656ea" stroke-width="1.300"/><rect x="179.80" y="480.00" width="21.20" height="25.90" rx="2" fill="#3e1383" stroke="#9656ea" stroke-width="1.300"/><rect x="179.80" y="508.90" width="21.20" height="26.10" rx="2" fill="#3e1383" stroke="#9656ea" stroke-width="1.300"/><rect x="203.70" y="480.00" width="21.20" height="25.90" rx="2" fill="#3e1383" stroke="#9656ea" stroke-width="1.300"/><rect x="203.70" y="508.90" width="21.20" height="26.10" rx="2" fill="#3e1383" stroke="#9656ea" stroke-width="1.300"/><rect x="230.40" y="480.00" width="21.20" height="25.90" rx="2" fill="#3e1383" stroke="#9656ea" stroke-width="1.300"/><rect x="230.40" y="508.90" width="21.20" height="26.10" rx="2" fill="#3e1383" stroke="#9656ea" stroke-width="1.300"/><rect x="254.30" y="480.00" width="21.20" height="25.90" rx="2" fill="#3e1383" stroke="#9656ea" stroke-width="1.300"/><rect x="254.30" y="508.90" width="21.20" height="26.10" rx="2" fill="#3e1383" stroke="#9656ea" stroke-width="1.300"/><rect x="278.20" y="480.00" width="21.20" height="25.90" rx="2" fill="#3e1383" stroke="#9656ea" stroke-width="1.300"/><rect x="278.20" y="508.90" width="21.20" height="26.10" rx="2" fill="#3e1383" stroke="#9656ea" stroke-width="1.300"/><rect x="302.10" y="480.00" width="21.20" height="25.90" rx="2" fill="#3e1383" stroke="#9656ea" stroke-width="1.300"/><rect x="302.10" y="508.90" width="21.20" height="26.10" rx="2" fill="#3e1383" stroke="#9656ea" stroke-width="1.300"/><rect x="328.80" y="480.00" width="21.20" height="25.90" rx="2" fill="#3e1383" stroke="#9656ea" stroke-width="1.300"/><rect x="328.80" y="508.90" width="21.20" height="26.10" rx="2" fill="#3e1383" stroke="#9656ea" stroke-width="1.300"/><rect x="352.70" y="480.00" width="21.20" height="25.90" rx="2" fill="#3e1383" stroke="#9656ea" stroke-width="1.300"/><rect x="352.70" y="508.90" width="21.20" height="26.10" rx="2" fill="#3e1383" stroke="#9656ea" stroke-width="1.300"/><rect x="376.60" y="480.00" width="21.20" height="25.90" rx="2" fill="#3e1383" stroke="#9656ea" stroke-width="1.300"/><rect x="376.60" y="508.90" width="21.20" height="26.10" rx="2" fill="#3e1383" stroke="#9656ea" stroke-width="1.300"/><rect x="400.50" y="480.00" width="21.20" height="25.90" rx="2" fill="#3e1383" stroke="#9656ea" stroke-width="1.300"/><rect x="400.50" y="508.90" width="21.20" height="26.10" rx="2" fill="#3e1383" stroke="#9656ea" stroke-width="1.300"/><rect x="427.20" y="480.00" width="21.20" height="25.90" rx="2" fill="#3e1383" stroke="#9656ea" stroke-width="1.300"/><rect x="427.20" y="508.90" width="21.20" height="26.10" rx="2" fill="#3e1383" stroke="#9656ea" stroke-width="1.300"/><rect x="451.10" y="480.00" width="21.20" height="25.90" rx="2" fill="#3e1383" stroke="#9656ea" stroke-width="1.300"/><rect x="451.10" y="508.90" width="21.20" height="26.10" rx="2" fill="#3e1383" stroke="#9656ea" stroke-width="1.300"/><rect x="475.00" y="480.00" width="21.20" height="25.90" rx="2" fill="#3e1383" stroke="#9656ea" stroke-width="1.300"/><rect x="475.00" y="508.90" width="21.20" height="26.10" rx="2" fill="#3e1383" stroke="#9656ea" stroke-width="1.300"/><rect x="498.90" y="480.00" width="21.20" height="25.90" rx="2" fill="#3e1383" stroke="#9656ea" stroke-width="1.300"/><rect x="498.90" y="508.90" width="21.20" height="26.10" rx="2" fill="#3e1383" stroke="#9656ea" stroke-width="1.300"/><rect x="531.00" y="480.00" width="21.20" height="25.90" rx="2" fill="#3e1383" stroke="#9656ea" stroke-width="1.300"/><rect x="531.00" y="508.90" width="21.20" height="26.10" rx="2" fill="#3e1383" stroke="#9656ea" stroke-width="1.300"/><rect x="554.90" y="480.00" width="21.20" height="25.90" rx="2" fill="#3e1383" stroke="#9656ea" stroke-width="1.300"/><rect x="554.90" y="508.90" width="21.20" height="26.10" rx="2" fill="#3e1383" stroke="#9656ea" stroke-width="1.300"/><rect x="578.80" y="480.00" width="21.20" height="25.90" rx="2" fill="#3e1383" stroke="#9656ea" stroke-width="1.300"/><rect x="578.80" y="508.90" width="21.20" height="26.10" rx="2" fill="#3e1383" stroke="#9656ea" stroke-width="1.300"/><rect x="602.70" y="480.00" width="21.20" height="25.90" rx="2" fill="#3e1383" stroke="#9656ea" stroke-width="1.300"/><rect x="602.70" y="508.90" width="21.20" height="26.10" rx="2" fill="#3e1383" stroke="#9656ea" stroke-width="1.300"/><rect x="629.40" y="480.00" width="21.20" height="25.90" rx="2" fill="#3e1383" stroke="#9656ea" stroke-width="1.300"/><rect x="629.40" y="508.90" width="21.20" height="26.10" rx="2" fill="#3e1383" stroke="#9656ea" stroke-width="1.300"/><rect x="653.30" y="480.00" width="21.20" height="25.90" rx="2" fill="#3e1383" stroke="#9656ea" stroke-width="1.300"/><rect x="653.30" y="508.90" width="21.20" height="26.10" rx="2" fill="#3e1383" stroke="#9656ea" stroke-width="1.300"/><rect x="677.20" y="480.00" width="21.20" height="25.90" rx="2" fill="#3e1383" stroke="#9656ea" stroke-width="1.300"/><rect x="677.20" y="508.90" width="21.20" height="26.10" rx="2" fill="#3e1383" stroke="#9656ea" stroke-width="1.300"/><rect x="701.10" y="480.00" width="21.20" height="25.90" rx="2" fill="#3e1383" stroke="#9656ea" stroke-width="1.300"/><rect x="701.10" y="508.90" width="21.20" height="26.10" rx="2" fill="#3e1383" stroke="#9656ea" stroke-width="1.300"/><rect x="727.80" y="480.00" width="21.20" height="25.90" rx="2" fill="#3e1383" stroke="#9656ea" stroke-width="1.300"/><rect x="727.80" y="508.90" width="21.20" height="26.10" rx="2" fill="#3e1383" stroke="#9656ea" stroke-width="1.300"/><rect x="751.70" y="480.00" width="21.20" height="25.90" rx="2" fill="#3e1383" stroke="#9656ea" stroke-width="1.300"/><rect x="751.70" y="508.90" width="21.20" height="26.10" rx="2" fill="#3e1383" stroke="#9656ea" stroke-width="1.300"/><rect x="775.60" y="480.00" width="21.20" height="25.90" rx="2" fill="#3e1383" stroke="#9656ea" stroke-width="1.300"/><rect x="775.60" y="508.90" width="21.20" height="26.10" rx="2" fill="#3e1383" stroke="#9656ea" stroke-width="1.300"/><rect x="799.50" y="480.00" width="21.20" height="25.90" rx="2" fill="#3e1383" stroke="#9656ea" stroke-width="1.300"/><rect x="799.50" y="508.90" width="21.20" height="26.10" rx="2" fill="#3e1383" stroke="#9656ea" stroke-width="1.300"/><rect x="0" y="489" width="77.800" height="39" fill="#2b0b57"/><rect x="8.40" y="480.00" width="67.60" height="25.90" rx="2" fill="#3e1383" stroke="#9656ea" stroke-width="1.300"/><rect x="8.40" y="508.90" width="67.60" height="26.10" rx="2" fill="#3e1383" stroke="#9656ea" stroke-width="1.300"/></g></svg>
<div class="t" style="left:15.8px;top:492.60px;font-size:7.2px;color:#f4f0fb;font-weight:400;-webkit-text-stroke:0.4px #f4f0fb;">Kick</div>
<div class="t" style="left:15.8px;top:516.60px;font-size:7.2px;color:#f4f0fb;font-weight:400;-webkit-text-stroke:0.4px #f4f0fb;">Snare</div>
<div class="a" style="left:0px;top:527.3px;width:800px;height:29px;background:#26262a;"></div>
<svg style="left:9px;top:537.5px;" width="10" height="9" viewBox="0 0 10 9"><path d="M1 3h1.600l2.400-2v7l-2.400-2H1z" fill="none" stroke="#c4c4ca" stroke-width="1" stroke-linejoin="round"/><path d="M6.500 2.800a2.200 2.200 0 0 1 0 3.400M7.800 1.500a4 4 0 0 1 0 6" fill="none" stroke="#c4c4ca" stroke-width="0.900" stroke-linecap="round"/></svg>
<div class="a" style="left:29px;top:541.3px;width:59.5px;height:1.3px;background:#b4b4b8;border-radius:1px"></div>
<div class="a" style="left:67.8px;top:535.6px;width:12.8px;height:12.8px;background:#3c3c42;border-radius:50%;border:1.200px solid #b4b4ba"></div>
<div class="t" style="left:116px;top:536.00px;font-size:12.6px;color:#f4f4f6;font-weight:400;-webkit-text-stroke:0.35px #f4f4f6;">00:44.9</div>
<svg style="left:0px;top:0px;" width="800" height="556" viewBox="0 0 800 556"><circle cx="181.4" cy="541.500" r="11" fill="#38383d"/><circle cx="208.6" cy="541.500" r="11" fill="#38383d"/><circle cx="235.4" cy="541.500" r="11" fill="#38383d"/><circle cx="262.4" cy="541.500" r="11" fill="#38383d"/><circle cx="289" cy="541.500" r="11" fill="#38383d"/><circle cx="181.400" cy="541.500" r="4.800" fill="#f0417f"/><path d="M212.200 537.800v7.400l-4.800-3.700z" fill="#fff"/><rect x="205.200" y="537.800" width="1.700" height="7.400" fill="#fff"/><path d="M235 537.800v7.400l-4.600-3.700z" fill="#fff"/><path d="M239.600 537.800l-4 3.700 4 3.700" fill="none" stroke="#fff" stroke-width="1.200" stroke-linejoin="round"/><path d="M260 537.500v8l6-4z" fill="#fff"/><path d="M289.400 537.800v7.400l4.600-3.700z" fill="#fff"/><path d="M284.800 537.800l4 3.700-4 3.700" fill="none" stroke="#fff" stroke-width="1.200" stroke-linejoin="round"/></svg>
<div class="t" style="left:336px;top:537.30px;font-size:8px;color:#b8b8be;font-weight:400;">-</div>
<div class="t" style="left:278px;width:200px;text-align:center;top:539.00px;font-size:6.8px;color:#e4e4e8;font-weight:400;-webkit-text-stroke:0.3px #e4e4e8">180</div>
<div class="a" style="left:405.5px;top:535.3px;width:21px;height:12px;background:transparent;border:1px solid #8c8c92;border-radius:6px"></div>
<div class="t" style="left:316px;width:200px;text-align:center;top:538.60px;font-size:5.6px;color:#e4e4e8;font-weight:400;">Off</div>
<svg style="left:438.5px;top:536.5px;" width="10" height="10" viewBox="0 0 10 10"><path d="M5 0.800l3.600 2.100v4.200L5 9.200 1.400 7.100V2.900z" fill="none" stroke="#c8c8ce" stroke-width="0.900" stroke-linejoin="round"/><circle cx="5" cy="5" r="1.500" fill="none" stroke="#c8c8ce" stroke-width="0.900"/></svg>
<div class="a" style="left:723px;top:530px;width:68px;height:22.5px;background:#d4d4d8;border-radius:11.250px;box-shadow:0 0 0 1.200px #141416"></div>
<svg style="left:733px;top:535.5px;" width="11" height="11" viewBox="0 0 11 11"><path d="M5.500 1.200a4.200 4.200 0 1 1-2.300 7.700L1.400 9.600l0.600-1.900A4.200 4.200 0 0 1 5.500 1.200z" fill="none" stroke="#4a4a50" stroke-width="1.100" stroke-linejoin="round"/></svg>
<div class="t" style="left:748px;top:537.35px;font-size:8.1px;color:#4a4a50;font-weight:700;">Support</div>
<svg style="left:0px;top:0px;" width="800" height="160" viewBox="0 0 800 160"><circle cx="784.800" cy="62" r="10.800" fill="#9f87ec"/><circle cx="784.800" cy="88.8" r="10.800" fill="#9f87ec"/><circle cx="784.800" cy="115.5" r="10.800" fill="#9f87ec"/><circle cx="784.800" cy="142" r="10.800" fill="#9f87ec"/><g transform="translate(784.800 62)" fill="none" stroke="#241a52" stroke-width="1.150"><circle cx="-2.600" cy="2.800" r="1.500"/><circle cx="2.600" cy="1.800" r="1.500"/><path d="M-1.100 2.800v-6l5.200-1v6"/></g><g transform="translate(784.800 88.800)" fill="none" stroke="#241a52" stroke-width="1.150" stroke-linecap="round"><circle cx="-1.900" cy="-2.100" r="1.750"/><path d="M-4.900 3.800c0-2.500 1.200-3.700 3-3.700s3 1.200 3 3.700"/><circle cx="2.700" cy="-2.100" r="1.750"/><path d="M2.900 0.100c1.700 0 2.800 1.200 2.800 3.700"/></g><g transform="translate(784.800 115.500)" fill="none" stroke="#241a52" stroke-width="1.150"><path d="M0 -3.600c2.600 0 4.400 1.500 4.400 3.400s-1.800 3.400-4.400 3.400c-0.700 0-1.300-0.100-1.900-0.300l-2.200 0.900 0.600-1.900c-0.600-0.600-0.900-1.300-0.900-2.100 0-1.900 1.800-3.400 4.400-3.400z"/></g><g transform="translate(784.800 142)" stroke="#241a52" stroke-width="1.150" fill="#241a52"><path d="M-3.200 -4.500v9M0 -4.500v9M3.200 -4.500v9"/><rect x="-4.200" y="0.500" width="2" height="1.600" stroke="none"/><rect x="-1" y="-2.500" width="2" height="1.600" stroke="none"/><rect x="2.200" y="1" width="2" height="1.600" stroke="none"/></g></svg>
<div class="a" style="left:0px;top:0px;width:1.5px;height:556px;background:rgba(255,255,255,0.075);"></div>
<div class="a" style="left:0px;top:344.25px;width:2px;height:31.75px;background:#9f7fef;"></div>
</body></html>
